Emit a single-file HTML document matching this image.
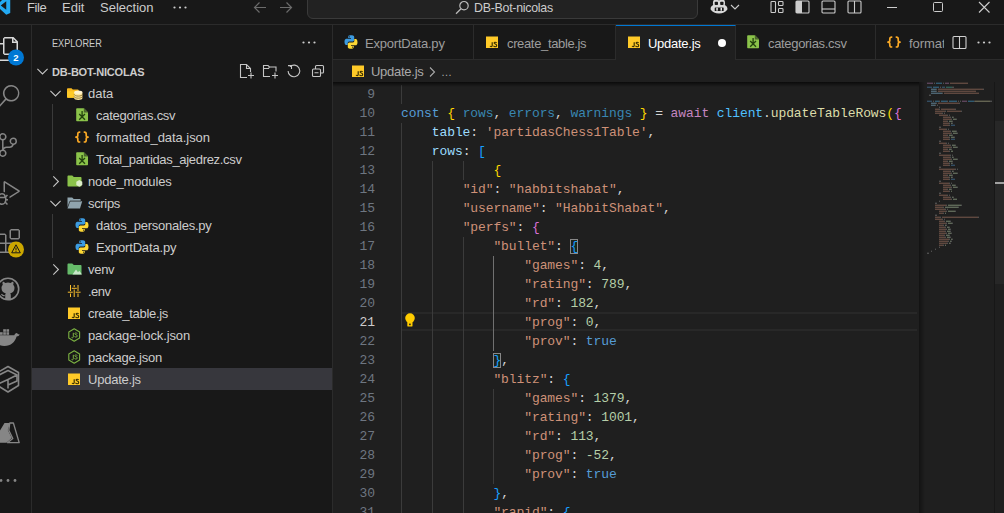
<!DOCTYPE html>
<html>
<head>
<meta charset="utf-8">
<style>
*{box-sizing:border-box;margin:0;padding:0}
html,body{width:1004px;height:513px;overflow:hidden;background:#181818}
body{font-family:"Liberation Sans",sans-serif;color:#cccccc;position:relative;font-size:13px}
.abs{position:absolute}
#title{left:0;top:0;width:1004px;height:25px;background:#181818;border-bottom:1px solid #2b2b2b}
#act{left:0;top:25px;width:32px;height:488px;background:#181818;border-right:1px solid #2b2b2b}
#side{left:32px;top:25px;width:301px;height:488px;background:#181818;border-right:1px solid #2b2b2b}
#tabs{left:333px;top:25px;width:671px;height:35px;background:#181818;border-bottom:1px solid #2b2b2b}
#crumb{left:333px;top:60px;width:671px;height:22px;background:#1f1f1f}
#editor{left:333px;top:82px;width:671px;height:431px;background:#1f1f1f;overflow:hidden}
.menu{top:0;height:16px;line-height:16px;font-size:13px;color:#cccccc}
.row{left:0;width:300px;height:22px;line-height:22px;font-size:13px;color:#cccccc;white-space:nowrap}
.row span.t{position:absolute;top:0}
.tab{top:0;height:35px;border-right:1px solid #2b2b2b;font-size:13px;line-height:35px;color:#9d9d9d;white-space:nowrap;overflow:hidden}
.code{font-family:"Liberation Mono",monospace;font-size:13px;letter-spacing:-0.1px;white-space:pre;line-height:19px;height:19px;left:68px;color:#d4d4d4}
.ln{font-family:"Liberation Mono",monospace;font-size:13px;letter-spacing:-0.1px;line-height:19px;height:19px;left:0;width:42px;text-align:right;color:#6e7681}
.k{color:#569cd6}.v{color:#9cdcfe}.c{color:#4fc1ff}.u{color:#3987b2}.s{color:#ce9178}.n{color:#b5cea8}.f{color:#dcdcaa}.a{color:#c586c0}
.b1{color:#ffd700}.b2{color:#da70d6}.b3{color:#179fff}
.g{width:1px;background:#404040}
.bm{outline:1px solid #888888;outline-offset:-1px;background:#0064001a}
.tab span{height:35px;line-height:35px}
</style>
</head>
<body>
<div id="title" class="abs">
<svg class="abs" style="left:-8.500px;top:-4px" width="19" height="19" viewBox="0 0 100 100"><path d="M96 11 L75 1 L30 42 L10 27 L3 31 L22 50 L3 69 L10 73 L30 58 L75 99 L96 89 Z M75 28 L46 50 L75 72 Z" fill="#23a9f2" fill-rule="evenodd"/></svg>
<div class="abs menu" style="left:27px;letter-spacing:-0.400px">File</div>
<div class="abs menu" style="left:62px">Edit</div>
<div class="abs menu" style="left:100px">Selection</div>
<svg class="abs" style="left:172px;top:5px" width="16" height="5" viewBox="0 0 16 5"><circle cx="2.5" cy="2.5" r="1.1" fill="#ccc"/><circle cx="8" cy="2.5" r="1.1" fill="#ccc"/><circle cx="13.5" cy="2.5" r="1.1" fill="#ccc"/></svg>
<svg class="abs" style="left:253px;top:1px" width="14" height="13" viewBox="0 0 14 13"><path d="M13 6.5H1.5M6.5 1.5l-5 5 5 5" fill="none" stroke="#6b6b6b" stroke-width="1.2"/></svg>
<svg class="abs" style="left:279px;top:1px" width="14" height="13" viewBox="0 0 14 13"><path d="M1 6.5h11.5M7.5 1.5l5 5-5 5" fill="none" stroke="#6b6b6b" stroke-width="1.2"/></svg>
<div class="abs" style="left:307px;top:-6px;width:391px;height:25px;border:1px solid #3a3a3a;border-radius:6px;background:#222222"></div>
<svg class="abs" style="left:455px;top:0px" width="15" height="15" viewBox="0 0 15 15"><circle cx="9" cy="5.7" r="4.2" fill="none" stroke="#bbb" stroke-width="1.2"/><path d="M6 8.8L1 13.8" stroke="#bbb" stroke-width="1.3" fill="none"/></svg>
<div class="abs" style="left:474px;top:0;height:16px;line-height:16px;font-size:12.4px;letter-spacing:-0.270px;color:#cccccc">DB-Bot-nicolas</div>
<svg class="abs" style="left:710px;top:-1px" width="18" height="15" viewBox="0 0 18 15"><path d="M3.200 6C2.400 3 3.400 0 6 0c1.800 0 2.700.800 3 2 .300-1.200 1.200-2 3-2 2.600 0 3.600 3 2.800 6 1.600.800 2.600 2 2.600 3.500v1c-1.800 2.600-4.800 3.900-8.400 3.900S2.400 13.100.600 10.500v-1C.600 8 1.600 6.800 3.200 6z" fill="#d8d8d8"/><rect x="4.700" y="2.800" width="3.300" height="3.200" rx=".8" fill="#181818"/><rect x="10.200" y="2.800" width="3.300" height="3.200" rx=".8" fill="#181818"/><rect x="4.700" y="8.400" width="9" height="3.600" rx=".6" fill="#181818"/><rect x="6.300" y="8.700" width="1.500" height="3" fill="#e8e8e8"/><rect x="10.500" y="8.700" width="1.500" height="3" fill="#e8e8e8"/></svg>
<svg class="abs" style="left:730px;top:4px" width="10" height="7" viewBox="0 0 10 7"><path d="M1 1l4 4 4-4" fill="none" stroke="#ccc" stroke-width="1.100"/></svg>
<svg class="abs" style="left:770px;top:0px" width="15" height="14" viewBox="0 0 15 14"><rect x="1" y="1.500" width="4.500" height="11" rx=".8" fill="none" stroke="#ccc" stroke-width="1.100"/><rect x="8.500" y="1.500" width="4.500" height="4" rx=".8" fill="none" stroke="#ccc" stroke-width="1.100"/><rect x="8.500" y="8.500" width="4.500" height="4" rx=".8" fill="none" stroke="#ccc" stroke-width="1.100"/></svg>
<svg class="abs" style="left:795px;top:0px" width="15" height="14" viewBox="0 0 15 14"><rect x="1" y="1" width="13" height="12" rx="1" fill="none" stroke="#ccc" stroke-width="1.100"/><rect x="1" y="1" width="6" height="12" fill="#ccc"/></svg>
<svg class="abs" style="left:821px;top:0px" width="15" height="14" viewBox="0 0 15 14"><rect x="1" y="1" width="13" height="12" rx="1" fill="none" stroke="#ccc" stroke-width="1.100"/><path d="M1 9h13" stroke="#ccc" stroke-width="1.100"/></svg>
<svg class="abs" style="left:847px;top:0px" width="15" height="14" viewBox="0 0 15 14"><rect x="1" y="1" width="13" height="12" rx="1" fill="none" stroke="#ccc" stroke-width="1.100"/><path d="M7.500 1v12" stroke="#ccc" stroke-width="1.100"/></svg>
<div class="abs" style="left:887px;top:7px;width:10px;height:1px;background:#ccc"></div>
<div class="abs" style="left:933px;top:2px;width:10px;height:10px;border:1px solid #ccc;border-radius:1.500px"></div>
<svg class="abs" style="left:978px;top:1px" width="13" height="13" viewBox="0 0 13 13"><path d="M1 1l10.500 10.500M11.500 1L1 11.500" stroke="#ccc" stroke-width="1.100" fill="none"/></svg>
</div>
<div id="act" class="abs">
<svg class="abs" style="left:0;top:0" width="31" height="488" viewBox="0 25 31 488">
<g transform="translate(-4,37)" fill="#d7d7d7"><path d="M17.5 0h-9L7 1.5V6H2.5L1 7.5v15.07L2.5 24h12.07L16 22.57V18h4.7l1.3-1.43V4.5L17.5 0zm0 2.12l2.38 2.38H17.5V2.12zm-3 20.38h-12v-15H7v9.07L8.5 18h6v4.5zm6-6h-12v-15H16V6h4.5v10.5z"/></g>
<circle cx="16" cy="57.500" r="8" fill="#0078d4"/>
<text x="16" y="61" font-family="Liberation Sans" font-size="9.500" font-weight="bold" fill="#fff" text-anchor="middle">2</text>
<g transform="translate(-4,85)" fill="#868686"><path d="M15.250 0a8.250 8.250 0 0 0-6.180 13.720L1 22.880l1.120 1.120 8.050-9.120A8.251 8.251 0 1 0 15.250.01V0zm0 15a6.750 6.750 0 1 1 0-13.500 6.750 6.750 0 0 1 0 13.500z"/></g>
<g transform="translate(-4,133)" fill="#868686"><path d="M21.007 8.222A3.738 3.738 0 0 0 15.045 5.200a3.737 3.737 0 0 0 1.156 6.583 2.988 2.988 0 0 1-2.668 1.670h-2.990a4.456 4.456 0 0 0-2.989 1.165V7.400a3.737 3.737 0 1 0-1.494 0v9.117a3.776 3.776 0 1 0 1.816.099 2.990 2.990 0 0 1 2.668-1.667h2.990a4.484 4.484 0 0 0 4.223-3.039 3.736 3.736 0 0 0 3.250-3.687zM4.565 3.738a2.242 2.242 0 1 1 4.484 0 2.242 2.242 0 0 1-4.484 0zm4.484 16.441a2.242 2.242 0 1 1-4.484 0 2.242 2.242 0 0 1 4.484 0zm8.221-9.715a2.242 2.242 0 1 1 0-4.485 2.242 2.242 0 0 1 0 4.485z"/></g>
<g transform="translate(-4,181)" fill="#868686"><path d="M10.940 13.500l-1.320 1.320a3.730 3.730 0 0 0-7.240 0L1.060 13.500 0 14.560l1.720 1.720-.220.220V18H0v1.500h1.500v.080c.077.489.214.966.410 1.420L0 22.940 1.060 24l1.650-1.650A4.308 4.308 0 0 0 6 24a4.310 4.310 0 0 0 3.290-1.650L10.940 24 12 22.940 10.090 21c.198-.464.336-.951.410-1.450v-.100H12V18h-1.500v-1.500l-.220-.220L12 14.560l-1.060-1.060zM6 13.500a2.250 2.250 0 0 1 2.250 2.250h-4.500A2.250 2.250 0 0 1 6 13.500zm3 6a3.330 3.330 0 0 1-3 3 3.330 3.330 0 0 1-3-3v-2.250h6v2.250zm14.760-9.900v1.260L13.500 17.370V15.600l8.500-5.370L9 2v9.460a5.070 5.070 0 0 0-1.500-.720V.630L8.640 0l15.120 9.600z"/></g>
<g transform="translate(-4,229)" fill="#868686"><path d="M13.500 1.500L15 0h7.500L24 1.500V9l-1.500 1.500H15L13.500 9V1.500zm1.500 0V9h7.500V1.500H15zM0 15V6l1.500-1.500H9L10.500 6v7.500H18l1.500 1.500v7.500L18 24H1.500L0 22.500V15zm9-1.500V6H1.500v7.500H9zM9 15H1.500v7.500H9V15zm1.500 7.500H18V15h-7.500v7.500z"/></g>
<circle cx="16" cy="249.500" r="8" fill="#cca700"/>
<path d="M16 244.800l4.300 8h-8.600z" fill="none" stroke="#181818" stroke-width="1"/><path d="M16 247.600v2.800M16 251.200v.9" stroke="#181818" stroke-width="1"/>
<circle cx="8" cy="289" r="10.700" fill="none" stroke="#868686" stroke-width="1.600"/>
<path d="M8 282.500c-1 0-1.900.200-2.700.500-.9-.900-2.100-1.300-2.600-1.200-.400 1-.300 2 .100 2.900-.800.900-1.300 2-1.300 3.300 0 3.300 2 4.800 4.300 5.300-.400.400-.600 1-.600 1.700v4.200h5.600v-4.200c0-.700-.200-1.300-.600-1.700 2.300-.500 4.300-2 4.300-5.300 0-1.300-.500-2.400-1.300-3.300.400-.900.500-1.900.100-2.900-.500-.100-1.700.300-2.600 1.200-.800-.300-1.700-.500-2.700-.500z" fill="#868686"/>
<path d="M4.700 295.500c-1.500.500-2.500-.300-3.200-1.500" fill="none" stroke="#868686" stroke-width="1.300"/>
<g fill="#868686"><path d="M-8 335.300h22.300c.300-1.500 1.400-2.500 2.800-2.400.300.900 1.200 1.500 2.500 1.300-.400 1.500-1.500 2.200-3 2.300-1.600 5.500-5.600 9.500-12.200 9.500-6.800 0-10.400-4.200-12.400-10.700z"/><rect x="-3.200" y="332.200" width="2.700" height="2.600"/><rect x="0" y="332.200" width="2.700" height="2.600"/><rect x="3.200" y="332.200" width="2.700" height="2.600"/><rect x="6.400" y="332.200" width="2.700" height="2.600"/><rect x="3.200" y="329.200" width="2.700" height="2.600"/><rect x="6.400" y="329.200" width="2.700" height="2.600"/></g>
<g fill="none" stroke="#868686" stroke-width="1.600" stroke-linejoin="round"><path d="M8 366.500l10.500 6v13l-10.500 6.500-10.500-6.500v-13z"/><path d="M-1 375l9-4.500 9 4.500-9 4.500v9M8 379.500l-9 4M17 375v6l-9 4"/></g>
<path d="M4.500 423h5.500l-2.200 7 4 8-5.300 4.700h-14z" fill="#868686"/><path d="M9.800 423h3.600l5.800 19.700h-11.700l5.300-4.200-4-8.300z" fill="#181818" stroke="#868686" stroke-width="1.300" stroke-linejoin="round"/>
<circle cx="1" cy="480.500" r="1.400" fill="#868686"/><circle cx="8" cy="480.500" r="1.400" fill="#868686"/><circle cx="15" cy="480.500" r="1.400" fill="#868686"/>
</svg>
</div>
<div id="side" class="abs">
<div class="abs" style="left:20px;top:10px;height:16px;line-height:16px;font-size:11px;color:#cccccc;transform:scaleX(0.831);transform-origin:0 0">EXPLORER</div>
<svg class="abs" style="left:269px;top:15px" width="16" height="5" viewBox="0 0 16 5"><circle cx="2.500" cy="2.500" r="1.100" fill="#ccc"/><circle cx="8" cy="2.500" r="1.100" fill="#ccc"/><circle cx="13.500" cy="2.500" r="1.100" fill="#ccc"/></svg>
<div class="abs row" style="top:35px;">
<svg class="abs" style="left:5px;top:6px" width="11" height="11" viewBox="0 0 11 11"><path d="M.400 2.800l5.100 5.100 5.100-5.100" fill="none" stroke="#c5c5c5" stroke-width="1.100"/></svg>
<span class="t fit" style="left:20px;top:0.500px;font-size:11px;font-weight:bold;letter-spacing:-0.218px;">DB-BOT-NICOLAS</span>
</div>
<div class="abs row" style="top:57px;">
<svg class="abs" style="left:18px;top:6px" width="11" height="11" viewBox="0 0 11 11"><path d="M.400 2.800l5.100 5.100 5.100-5.100" fill="none" stroke="#c5c5c5" stroke-width="1.100"/></svg>
<svg class="abs" style="left:33px;top:3px" width="18" height="16" viewBox="0 0 18 16"><path d="M2.900 3.200h3.600l1.300 1.300h5c.500 0 .900.400.900.900v6.400c0 .500-.400.900-.900.900H2.900c-.500 0-.900-.400-.900-.900V4.100c0-.500.400-.900.900-.900z" fill="#f9b91f"/><path d="M2 6.300h11.700v5.500c0 .500-.400.900-.900.900H2.900c-.500 0-.900-.400-.900-.900z" fill="#ffca28"/><path d="M9.200 7.300v6c0 .900 1.800 1.700 4.100 1.700s4.100-.800 4.100-1.700v-6z" fill="#ffe7a0"/><ellipse cx="13.300" cy="7.300" rx="4.100" ry="1.700" fill="#fff3cf"/><path d="M9.200 9.400c0 .900 1.800 1.700 4.100 1.700s4.100-.800 4.100-1.700M9.200 11.500c0 .900 1.800 1.700 4.100 1.700s4.100-.800 4.100-1.700" fill="none" stroke="#6b5510" stroke-width=".7"/></svg>
<span class="t fit" style="left:56px;top:1px;letter-spacing:-0.037px;">data</span>
</div>
<div class="abs row" style="top:79px;">
<svg class="abs" style="left:42px;top:3px" width="16" height="16" viewBox="0 0 16 16"><path d="M3.200 1.300h6.800l4 4v8c0 .600-.400 1-1 1H3.200c-.600 0-1-.400-1-1V2.300c0-.600.400-1 1-1z" fill="#8bc34a"/><path d="M9.800 1.300v4.200h4.200z" fill="#181818" opacity=".55"/><path d="M5.200 7l5.800 5.800M11 7l-5.800 5.800M8.100 4v5" stroke="#23420e" stroke-width="1.300" fill="none"/></svg>
<span class="t fit" style="left:64px;top:1px;letter-spacing:-0.269px;">categorias.csv</span>
</div>
<div class="abs row" style="top:101px;">
<svg class="abs" style="left:42px;top:3px" width="16" height="16" viewBox="0 0 16 16"><path d="M6.300 3.200H5.600c-1.100 0-1.800.600-1.800 1.700v1.600c0 .900-.700 1.600-1.900 1.600 1.200 0 1.900.700 1.900 1.600v1.600c0 1.100.700 1.700 1.800 1.700h.700M9.700 3.200h.700c1.100 0 1.800.600 1.800 1.700v1.600c0 .900.700 1.600 1.900 1.600-1.200 0-1.900.700-1.900 1.600v1.600c0 1.100-.700 1.700-1.800 1.700h-.700" fill="none" stroke="#f9a825" stroke-width="1.700" stroke-linejoin="round"/></svg>
<span class="t fit" style="left:64px;top:1px;letter-spacing:-0.051px;">formatted_data.json</span>
</div>
<div class="abs row" style="top:123px;">
<svg class="abs" style="left:42px;top:3px" width="16" height="16" viewBox="0 0 16 16"><path d="M3.200 1.300h6.800l4 4v8c0 .600-.400 1-1 1H3.200c-.600 0-1-.400-1-1V2.300c0-.600.400-1 1-1z" fill="#8bc34a"/><path d="M9.800 1.300v4.200h4.200z" fill="#181818" opacity=".55"/><path d="M5.200 7l5.800 5.800M11 7l-5.800 5.800M8.100 4v5" stroke="#23420e" stroke-width="1.300" fill="none"/></svg>
<span class="t fit" style="left:64px;top:1px;letter-spacing:-0.321px;">Total_partidas_ajedrez.csv</span>
</div>
<div class="abs row" style="top:145px;">
<svg class="abs" style="left:18px;top:6px" width="11" height="11" viewBox="0 0 11 11"><path d="M3.300.400l5.100 5.100-5.100 5.100" fill="none" stroke="#c5c5c5" stroke-width="1.100"/></svg>
<svg class="abs" style="left:34px;top:3px" width="18" height="16" viewBox="0 0 18 16"><path d="M1.500 2.500h4.800l1.500 1.500h6.700c.600 0 1 .400 1 1v7.500c0 .600-.400 1-1 1h-12c-.600 0-1-.400-1-1v-9c0-.600.400-1 1-1z" fill="#8bc34a"/><path d="M13.300 7l3 1.700v3.400l-3 1.700-3-1.700V8.700z" fill="#dcedc8"/></svg>
<span class="t fit" style="left:56px;top:1px;letter-spacing:-0.135px;">node_modules</span>
</div>
<div class="abs row" style="top:167px;">
<svg class="abs" style="left:18px;top:6px" width="11" height="11" viewBox="0 0 11 11"><path d="M.400 2.800l5.100 5.100 5.100-5.100" fill="none" stroke="#c5c5c5" stroke-width="1.100"/></svg>
<svg class="abs" style="left:34px;top:3px" width="18" height="16" viewBox="0 0 18 16"><path d="M1.500 2.500h4.700l1.500 1.500h6c.600 0 1 .400 1 1v1.200H4.200L1.500 12.500z" fill="#90a4ae"/><path d="M3.600 6.200h12.600l-2.200 7.300H1.500z" fill="#90a4ae"/><path d="M1.500 12.500L4 6h11" stroke="#181818" stroke-width=".6" fill="none"/></svg>
<span class="t fit" style="left:56px;top:1px;letter-spacing:-0.331px;">scrips</span>
</div>
<div class="abs row" style="top:189px;">
<svg class="abs" style="left:42px;top:3px" width="16" height="16" viewBox="0 0 16 16"><path d="M7.900 1.200c-2.800 0-2.700 1.200-2.700 1.200v1.700h2.800v.600H3.600S1.500 4.500 1.500 7.800s1.800 3.200 1.800 3.200h1.400V9.300s-.100-1.800 1.800-1.800h3s1.700 0 1.700-1.700V2.900s.300-1.700-3.300-1.700zM6.300 2.200a.600.600 0 1 1 0 1.200.600.600 0 0 1 0-1.200z" fill="#3c9be0"/><path d="M8.100 14.800c2.800 0 2.700-1.200 2.700-1.200v-1.700H8v-.600h4.400s2.100.200 2.100-3.100-1.800-3.200-1.800-3.200h-1.400v1.700s.100 1.800-1.800 1.800h-3s-1.700 0-1.700 1.700v2.900s-.300 1.700 3.300 1.700zm1.600-1a.600.600 0 1 1 0-1.200.600.600 0 0 1 0 1.200z" fill="#fdd835"/></svg>
<span class="t fit" style="left:64px;top:1px;letter-spacing:-0.233px;">datos_personales.py</span>
</div>
<div class="abs row" style="top:211px;">
<svg class="abs" style="left:42px;top:3px" width="16" height="16" viewBox="0 0 16 16"><path d="M7.900 1.200c-2.800 0-2.700 1.200-2.700 1.200v1.700h2.800v.600H3.600S1.500 4.500 1.500 7.800s1.800 3.200 1.800 3.200h1.400V9.300s-.100-1.800 1.800-1.800h3s1.700 0 1.700-1.700V2.900s.300-1.700-3.300-1.700zM6.300 2.200a.600.600 0 1 1 0 1.200.600.600 0 0 1 0-1.200z" fill="#3c9be0"/><path d="M8.100 14.800c2.800 0 2.700-1.200 2.700-1.200v-1.700H8v-.600h4.400s2.100.200 2.100-3.100-1.800-3.200-1.800-3.200h-1.400v1.700s.100 1.800-1.800 1.800h-3s-1.700 0-1.700 1.700v2.900s-.300 1.700 3.300 1.700zm1.600-1a.600.600 0 1 1 0-1.200.600.600 0 0 1 0 1.200z" fill="#fdd835"/></svg>
<span class="t fit" style="left:64px;top:1px;letter-spacing:-0.157px;">ExportData.py</span>
</div>
<div class="abs row" style="top:233px;">
<svg class="abs" style="left:18px;top:6px" width="11" height="11" viewBox="0 0 11 11"><path d="M3.300.400l5.100 5.100-5.100 5.100" fill="none" stroke="#c5c5c5" stroke-width="1.100"/></svg>
<svg class="abs" style="left:34px;top:3px" width="18" height="16" viewBox="0 0 18 16"><path d="M1.500 2.500h4.800l1.500 1.500h6.700c.600 0 1 .400 1 1v7.500c0 .600-.400 1-1 1h-12c-.600 0-1-.400-1-1v-9c0-.600.400-1 1-1z" fill="#66bb6a"/><path d="M6.500 13.500l3.500-5 2 2.800 1.300-1.600 2.700 3.800z" fill="#c8e6c9"/></svg>
<span class="t fit" style="left:56px;top:1px;letter-spacing:-0.287px;">venv</span>
</div>
<div class="abs row" style="top:255px;">
<svg class="abs" style="left:33px;top:3px" width="16" height="16" viewBox="0 0 16 16"><path d="M5.500 2v6M5.500 10.500v3.500M2.800 9.200h5M9.200 2v2M9.200 6.500v7.500M6.800 5.300h5M13 2v6M13 10.500v3.500M10.600 9.200h5" stroke="#fbc02d" stroke-width="1" fill="none"/></svg>
<span class="t fit" style="left:56px;top:1px;letter-spacing:-0.491px;">.env</span>
</div>
<div class="abs row" style="top:277px;">
<svg class="abs" style="left:33px;top:3px" width="16" height="16" viewBox="0 0 16 16"><rect x="3" y="2.500" width="12" height="11.500" fill="#ffca28"/><path d="M9.200 8.200v3.300c0 .800-.500 1.100-1 1.100-.500 0-.900-.200-1.100-.700" fill="none" stroke="#3a3000" stroke-width="1.200"/><path d="M13.600 9c-.300-.500-.800-.800-1.400-.800-.700 0-1.100.400-1.100.900 0 1.200 2.600.700 2.600 2.300 0 .800-.700 1.300-1.500 1.300-.800 0-1.300-.300-1.700-1" fill="none" stroke="#3a3000" stroke-width="1.100"/></svg>
<span class="t fit" style="left:56px;top:1px;letter-spacing:-0.304px;">create_table.js</span>
</div>
<div class="abs row" style="top:299px;">
<svg class="abs" style="left:33px;top:3px" width="16" height="16" viewBox="0 0 16 16"><path d="M9.200 1.800l5.400 3.100v6.200l-5.400 3.100-5.400-3.100V4.900z" fill="none" stroke="#7cb342" stroke-width="1.100" stroke-linejoin="round"/><path d="M8.300 5.800v4c0 .700-.400 1-.900 1-.400 0-.700-.100-.900-.400" fill="none" stroke="#7cb342" stroke-width="1"/><path d="M12.200 6.700c-.300-.600-.700-.900-1.300-.900-.600 0-1.100.400-1.100.900 0 1.300 2.500.700 2.500 2.300 0 .700-.600 1.100-1.400 1.100-.700 0-1.200-.300-1.500-.900" fill="none" stroke="#7cb342" stroke-width=".9"/></svg>
<span class="t fit" style="left:56px;top:1px;letter-spacing:-0.117px;">package-lock.json</span>
</div>
<div class="abs row" style="top:321px;">
<svg class="abs" style="left:33px;top:3px" width="16" height="16" viewBox="0 0 16 16"><path d="M9.200 1.800l5.400 3.100v6.200l-5.400 3.100-5.400-3.100V4.900z" fill="none" stroke="#7cb342" stroke-width="1.100" stroke-linejoin="round"/><path d="M8.300 5.800v4c0 .700-.400 1-.900 1-.400 0-.700-.100-.900-.400" fill="none" stroke="#7cb342" stroke-width="1"/><path d="M12.200 6.700c-.300-.600-.700-.900-1.300-.900-.600 0-1.100.400-1.100.900 0 1.300 2.500.700 2.500 2.300 0 .700-.600 1.100-1.400 1.100-.700 0-1.200-.300-1.500-.900" fill="none" stroke="#7cb342" stroke-width=".9"/></svg>
<span class="t fit" style="left:56px;top:1px;letter-spacing:-0.220px;">package.json</span>
</div>
<div class="abs row" style="top:343px;background:#37373d;">
<svg class="abs" style="left:33px;top:3px" width="16" height="16" viewBox="0 0 16 16"><rect x="3" y="2.500" width="12" height="11.500" fill="#ffca28"/><path d="M9.200 8.200v3.300c0 .800-.500 1.100-1 1.100-.500 0-.900-.200-1.100-.700" fill="none" stroke="#3a3000" stroke-width="1.200"/><path d="M13.600 9c-.300-.500-.800-.800-1.400-.800-.700 0-1.100.400-1.100.900 0 1.200 2.600.700 2.600 2.300 0 .800-.700 1.300-1.500 1.300-.800 0-1.300-.300-1.700-1" fill="none" stroke="#3a3000" stroke-width="1.100"/></svg>
<span class="t fit" style="left:56px;top:1px;letter-spacing:-0.228px;">Update.js</span>
</div>
<div class="abs" style="left:20px;top:79px;width:1px;height:66px;background:#3a3a3a"></div>
<div class="abs" style="left:20px;top:189px;width:1px;height:44px;background:#3a3a3a"></div>
<svg class="abs" style="left:207px;top:37px" width="88" height="18" viewBox="0 0 88 18" fill="none" stroke="#c5c5c5" stroke-width="1.100"><path d="M8 15.500H1.500v-13h6l4 4v3.500M7.500 2.500v4H11.500M9 13.500h6M12 10.500v6"/><path d="M31 14.500H24.500v-11h4.500l1.500 1.500h6.500v4.500M24.500 6.500h5l1-1.500M33 13.500h6M36 10.500v6"/><path d="M50.900 4.700A5.800 5.800 0 1 1 49.100 8.900M49 3.600h3.500v3.500"/><rect x="73.500" y="7" width="8" height="7.500" rx="1"/><path d="M76.500 7v-2.500c0-.500.500-1 1-1h6c.500 0 1 .500 1 1v5.500c0 .500-.500 1-1 1h-2M75.500 10.800h4"/></svg>
</div>
<div id="tabs" class="abs">
<div class="abs tab" style="left:0px;width:141px;">
<svg class="abs" style="left:10px;top:9px" width="16" height="16" viewBox="0 0 16 16"><path d="M7.900 1.200c-2.800 0-2.700 1.200-2.700 1.200v1.700h2.800v.600H3.600S1.500 4.500 1.500 7.800s1.800 3.200 1.800 3.200h1.400V9.300s-.100-1.800 1.800-1.800h3s1.700 0 1.700-1.700V2.900s.300-1.700-3.300-1.700zM6.300 2.200a.600.600 0 1 1 0 1.200.600.600 0 0 1 0-1.200z" fill="#3c9be0"/><path d="M8.100 14.800c2.800 0 2.700-1.200 2.700-1.200v-1.700H8v-.600h4.400s2.100.200 2.100-3.100-1.800-3.200-1.800-3.200h-1.400v1.700s.100 1.800-1.800 1.800h-3s-1.700 0-1.700 1.700v2.900s-.300 1.700 3.300 1.700zm1.600-1a.600.600 0 1 1 0-1.200.600.600 0 0 1 0 1.200z" fill="#fdd835"/></svg>
<span class="abs fit" id="tab:ExportData.py" style="left:32px;top:1px;color:#9d9d9d;letter-spacing:-0.207px;">ExportData.py</span>
</div>
<div class="abs tab" style="left:141px;width:142px;">
<svg class="abs" style="left:9px;top:9px" width="16" height="16" viewBox="0 0 16 16"><rect x="3" y="2.500" width="12" height="11.500" fill="#ffca28"/><path d="M9.200 8.200v3.300c0 .800-.500 1.100-1 1.100-.500 0-.900-.200-1.100-.700" fill="none" stroke="#3a3000" stroke-width="1.200"/><path d="M13.600 9c-.300-.500-.800-.800-1.400-.800-.700 0-1.100.400-1.100.900 0 1.200 2.600.700 2.600 2.300 0 .800-.700 1.300-1.500 1.300-.800 0-1.300-.300-1.700-1" fill="none" stroke="#3a3000" stroke-width="1.100"/></svg>
<span class="abs fit" id="tab:create_table.js" style="left:33px;top:1px;color:#9d9d9d;letter-spacing:-0.354px;">create_table.js</span>
</div>
<div class="abs tab" style="left:283px;width:120px;background:#1f1f1f;height:36px;border-top:1px solid #0078d4;">
<svg class="abs" style="left:9px;top:8px" width="16" height="16" viewBox="0 0 16 16"><rect x="3" y="2.500" width="12" height="11.500" fill="#ffca28"/><path d="M9.200 8.200v3.300c0 .800-.500 1.100-1 1.100-.500 0-.900-.200-1.100-.700" fill="none" stroke="#3a3000" stroke-width="1.200"/><path d="M13.600 9c-.300-.500-.800-.800-1.400-.800-.700 0-1.100.400-1.100.900 0 1.200 2.600.700 2.600 2.300 0 .800-.700 1.300-1.500 1.300-.800 0-1.300-.300-1.700-1" fill="none" stroke="#3a3000" stroke-width="1.100"/></svg>
<span class="abs fit" id="tab:Update.js" style="left:32px;top:0px;color:#ffffff;letter-spacing:-0.266px;">Update.js</span>
<div class="abs" style="left:101.500px;top:13px;width:8px;height:8px;border-radius:4px;background:#ffffff"></div>
</div>
<div class="abs tab" style="left:403px;width:140px;">
<svg class="abs" style="left:9px;top:9px" width="16" height="16" viewBox="0 0 16 16"><path d="M3.200 1.300h6.800l4 4v8c0 .600-.400 1-1 1H3.200c-.600 0-1-.400-1-1V2.300c0-.600.400-1 1-1z" fill="#8bc34a"/><path d="M9.800 1.300v4.200h4.200z" fill="#181818" opacity=".55"/><path d="M5.200 7l5.800 5.800M11 7l-5.800 5.800M8.100 4v5" stroke="#23420e" stroke-width="1.300" fill="none"/></svg>
<span class="abs fit" id="tab:categorias.csv" style="left:32px;top:1px;color:#9d9d9d;letter-spacing:-0.323px;">categorias.csv</span>
</div>
<div class="abs tab" style="left:543px;width:140px;">
<svg class="abs" style="left:10px;top:9px" width="16" height="16" viewBox="0 0 16 16"><path d="M6.300 3.200H5.600c-1.100 0-1.800.600-1.800 1.700v1.600c0 .900-.700 1.600-1.900 1.600 1.200 0 1.900.700 1.900 1.600v1.600c0 1.100.700 1.700 1.800 1.700h.700M9.700 3.200h.700c1.100 0 1.800.600 1.800 1.700v1.600c0 .900.700 1.600 1.900 1.600-1.200 0-1.900.700-1.900 1.600v1.600c0 1.100-.700 1.700-1.800 1.700h-.700" fill="none" stroke="#f9a825" stroke-width="1.700" stroke-linejoin="round"/></svg>
<span class="abs fit" id="tab:formatted_data.json" style="left:33px;top:1px;color:#9d9d9d;letter-spacing:-0.051px;">formatted_data.json</span>
</div>
<div class="abs" style="left:611px;top:0;width:60px;height:34px;background:#181818"></div>
<svg class="abs" style="left:619px;top:10px" width="15" height="15" viewBox="0 0 15 15" fill="none" stroke="#d0d0d0" stroke-width="1.100"><rect x="1" y="1.500" width="13" height="12" rx="1"/><path d="M7.500 1.500v12"/></svg>
<svg class="abs" style="left:643px;top:15px" width="16" height="5" viewBox="0 0 16 5"><circle cx="2.500" cy="2.500" r="1.100" fill="#ccc"/><circle cx="8" cy="2.500" r="1.100" fill="#ccc"/><circle cx="13.500" cy="2.500" r="1.100" fill="#ccc"/></svg>
</div>
<div id="crumb" class="abs">
<svg class="abs" style="left:16px;top:3px" width="16" height="16" viewBox="0 0 16 16"><rect x="3" y="2.500" width="12" height="11.500" fill="#ffca28"/><path d="M9.200 8.200v3.300c0 .800-.500 1.100-1 1.100-.500 0-.900-.200-1.100-.700" fill="none" stroke="#3a3000" stroke-width="1.200"/><path d="M13.600 9c-.300-.500-.800-.800-1.400-.800-.700 0-1.100.400-1.100.900 0 1.200 2.600.700 2.600 2.300 0 .800-.700 1.300-1.500 1.300-.800 0-1.300-.300-1.700-1" fill="none" stroke="#3a3000" stroke-width="1.100"/></svg>
<span class="abs fit" id="crumb:Update.js" style="left:38px;top:1px;height:22px;line-height:22px;font-size:13px;color:#a9a9a9;letter-spacing:-0.266px;">Update.js</span>
<svg class="abs" style="left:95px;top:6px" width="9" height="12" viewBox="0 0 9 12"><path d="M2 1.500l4.500 4.500-4.500 4.500" fill="none" stroke="#a9a9a9" stroke-width="1.100"/></svg>
<span class="abs" style="left:108px;top:1px;height:22px;line-height:22px;font-size:11px;color:#a9a9a9">…</span>
</div>
<div id="editor" class="abs">
<div class="abs" style="left:68px;top:230px;width:516px;height:19px;border-top:2px solid #282828;border-bottom:2px solid #282828"></div>
<div class="abs g" style="left:68.0px;top:2.5px;height:19px;background:#3b3b3b"></div>
<div class="abs ln" style="top:2.5px;">9</div>
<div class="abs code" style="top:2.5px"></div>
<div class="abs ln" style="top:21.5px;">10</div>
<div class="abs code" style="top:21.5px"><span class="k">const</span> <span class="b1">{</span> <span class="u">rows</span>, <span class="u">errors</span>, <span class="u">warnings</span> <span class="b1">}</span> = <span class="a">await</span> <span class="c">client</span>.<span class="f">updateTableRows</span><span class="b1">(</span><span class="b2">{</span></div>
<div class="abs g" style="left:68.0px;top:40.5px;height:19px;background:#3b3b3b"></div>
<div class="abs ln" style="top:40.5px;">11</div>
<div class="abs code" style="top:40.5px">    <span class="v">table</span>: <span class="s">'partidasChess1Table'</span>,</div>
<div class="abs g" style="left:68.0px;top:59.5px;height:19px;background:#3b3b3b"></div>
<div class="abs ln" style="top:59.5px;">12</div>
<div class="abs code" style="top:59.5px">    <span class="v">rows</span>: <span class="b3">[</span></div>
<div class="abs g" style="left:68.0px;top:78.5px;height:19px;background:#3b3b3b"></div>
<div class="abs g" style="left:98.8px;top:78.5px;height:19px;background:#3b3b3b"></div>
<div class="abs g" style="left:129.6px;top:78.5px;height:19px;background:#3b3b3b"></div>
<div class="abs ln" style="top:78.5px;">13</div>
<div class="abs code" style="top:78.5px">            <span class="b1">{</span></div>
<div class="abs g" style="left:68.0px;top:97.5px;height:19px;background:#3b3b3b"></div>
<div class="abs g" style="left:98.8px;top:97.5px;height:19px;background:#3b3b3b"></div>
<div class="abs ln" style="top:97.5px;">14</div>
<div class="abs code" style="top:97.5px">        <span class="s">"id"</span>: <span class="s">"habbitshabat"</span>,</div>
<div class="abs g" style="left:68.0px;top:116.5px;height:19px;background:#3b3b3b"></div>
<div class="abs g" style="left:98.8px;top:116.5px;height:19px;background:#3b3b3b"></div>
<div class="abs ln" style="top:116.5px;">15</div>
<div class="abs code" style="top:116.5px">        <span class="s">"username"</span>: <span class="s">"HabbitShabat"</span>,</div>
<div class="abs g" style="left:68.0px;top:135.5px;height:19px;background:#3b3b3b"></div>
<div class="abs g" style="left:98.8px;top:135.5px;height:19px;background:#3b3b3b"></div>
<div class="abs ln" style="top:135.5px;">16</div>
<div class="abs code" style="top:135.5px">        <span class="s">"perfs"</span>: <span class="b2">{</span></div>
<div class="abs g" style="left:68.0px;top:154.5px;height:19px;background:#3b3b3b"></div>
<div class="abs g" style="left:98.8px;top:154.5px;height:19px;background:#3b3b3b"></div>
<div class="abs g" style="left:129.6px;top:154.5px;height:19px;background:#3b3b3b"></div>
<div class="abs ln" style="top:154.5px;">17</div>
<div class="abs code" style="top:154.5px">            <span class="s">"bullet"</span>: <span class="b3 bm">{</span></div>
<div class="abs g" style="left:68.0px;top:173.5px;height:19px;background:#3b3b3b"></div>
<div class="abs g" style="left:98.8px;top:173.5px;height:19px;background:#3b3b3b"></div>
<div class="abs g" style="left:129.6px;top:173.5px;height:19px;background:#3b3b3b"></div>
<div class="abs g" style="left:160.4px;top:173.5px;height:19px;background:#707070"></div>
<div class="abs ln" style="top:173.5px;">18</div>
<div class="abs code" style="top:173.5px">                <span class="s">"games"</span>: <span class="n">4</span>,</div>
<div class="abs g" style="left:68.0px;top:192.5px;height:19px;background:#3b3b3b"></div>
<div class="abs g" style="left:98.8px;top:192.5px;height:19px;background:#3b3b3b"></div>
<div class="abs g" style="left:129.6px;top:192.5px;height:19px;background:#3b3b3b"></div>
<div class="abs g" style="left:160.4px;top:192.5px;height:19px;background:#707070"></div>
<div class="abs ln" style="top:192.5px;">19</div>
<div class="abs code" style="top:192.5px">                <span class="s">"rating"</span>: <span class="n">789</span>,</div>
<div class="abs g" style="left:68.0px;top:211.5px;height:19px;background:#3b3b3b"></div>
<div class="abs g" style="left:98.8px;top:211.5px;height:19px;background:#3b3b3b"></div>
<div class="abs g" style="left:129.6px;top:211.5px;height:19px;background:#3b3b3b"></div>
<div class="abs g" style="left:160.4px;top:211.5px;height:19px;background:#707070"></div>
<div class="abs ln" style="top:211.5px;">20</div>
<div class="abs code" style="top:211.5px">                <span class="s">"rd"</span>: <span class="n">182</span>,</div>
<div class="abs g" style="left:68.0px;top:230.5px;height:19px;background:#3b3b3b"></div>
<div class="abs g" style="left:98.8px;top:230.5px;height:19px;background:#3b3b3b"></div>
<div class="abs g" style="left:129.6px;top:230.5px;height:19px;background:#3b3b3b"></div>
<div class="abs g" style="left:160.4px;top:230.5px;height:19px;background:#707070"></div>
<div class="abs ln" style="top:230.5px;color:#cccccc;">21</div>
<div class="abs code" style="top:230.5px">                <span class="s">"prog"</span>: <span class="n">0</span>,</div>
<div class="abs g" style="left:68.0px;top:249.5px;height:19px;background:#3b3b3b"></div>
<div class="abs g" style="left:98.8px;top:249.5px;height:19px;background:#3b3b3b"></div>
<div class="abs g" style="left:129.6px;top:249.5px;height:19px;background:#3b3b3b"></div>
<div class="abs g" style="left:160.4px;top:249.5px;height:19px;background:#707070"></div>
<div class="abs ln" style="top:249.5px;">22</div>
<div class="abs code" style="top:249.5px">                <span class="s">"prov"</span>: <span class="k">true</span></div>
<div class="abs g" style="left:68.0px;top:268.5px;height:19px;background:#3b3b3b"></div>
<div class="abs g" style="left:98.8px;top:268.5px;height:19px;background:#3b3b3b"></div>
<div class="abs g" style="left:129.6px;top:268.5px;height:19px;background:#3b3b3b"></div>
<div class="abs ln" style="top:268.5px;">23</div>
<div class="abs code" style="top:268.5px">            <span class="b3 bm">}</span>,</div>
<div class="abs g" style="left:68.0px;top:287.5px;height:19px;background:#3b3b3b"></div>
<div class="abs g" style="left:98.8px;top:287.5px;height:19px;background:#3b3b3b"></div>
<div class="abs g" style="left:129.6px;top:287.5px;height:19px;background:#3b3b3b"></div>
<div class="abs ln" style="top:287.5px;">24</div>
<div class="abs code" style="top:287.5px">            <span class="s">"blitz"</span>: <span class="b3">{</span></div>
<div class="abs g" style="left:68.0px;top:306.5px;height:19px;background:#3b3b3b"></div>
<div class="abs g" style="left:98.8px;top:306.5px;height:19px;background:#3b3b3b"></div>
<div class="abs g" style="left:129.6px;top:306.5px;height:19px;background:#3b3b3b"></div>
<div class="abs g" style="left:160.4px;top:306.5px;height:19px;background:#3b3b3b"></div>
<div class="abs ln" style="top:306.5px;">25</div>
<div class="abs code" style="top:306.5px">                <span class="s">"games"</span>: <span class="n">1379</span>,</div>
<div class="abs g" style="left:68.0px;top:325.5px;height:19px;background:#3b3b3b"></div>
<div class="abs g" style="left:98.8px;top:325.5px;height:19px;background:#3b3b3b"></div>
<div class="abs g" style="left:129.6px;top:325.5px;height:19px;background:#3b3b3b"></div>
<div class="abs g" style="left:160.4px;top:325.5px;height:19px;background:#3b3b3b"></div>
<div class="abs ln" style="top:325.5px;">26</div>
<div class="abs code" style="top:325.5px">                <span class="s">"rating"</span>: <span class="n">1001</span>,</div>
<div class="abs g" style="left:68.0px;top:344.5px;height:19px;background:#3b3b3b"></div>
<div class="abs g" style="left:98.8px;top:344.5px;height:19px;background:#3b3b3b"></div>
<div class="abs g" style="left:129.6px;top:344.5px;height:19px;background:#3b3b3b"></div>
<div class="abs g" style="left:160.4px;top:344.5px;height:19px;background:#3b3b3b"></div>
<div class="abs ln" style="top:344.5px;">27</div>
<div class="abs code" style="top:344.5px">                <span class="s">"rd"</span>: <span class="n">113</span>,</div>
<div class="abs g" style="left:68.0px;top:363.5px;height:19px;background:#3b3b3b"></div>
<div class="abs g" style="left:98.8px;top:363.5px;height:19px;background:#3b3b3b"></div>
<div class="abs g" style="left:129.6px;top:363.5px;height:19px;background:#3b3b3b"></div>
<div class="abs g" style="left:160.4px;top:363.5px;height:19px;background:#3b3b3b"></div>
<div class="abs ln" style="top:363.5px;">28</div>
<div class="abs code" style="top:363.5px">                <span class="s">"prog"</span>: <span class="n">-52</span>,</div>
<div class="abs g" style="left:68.0px;top:382.5px;height:19px;background:#3b3b3b"></div>
<div class="abs g" style="left:98.8px;top:382.5px;height:19px;background:#3b3b3b"></div>
<div class="abs g" style="left:129.6px;top:382.5px;height:19px;background:#3b3b3b"></div>
<div class="abs g" style="left:160.4px;top:382.5px;height:19px;background:#3b3b3b"></div>
<div class="abs ln" style="top:382.5px;">29</div>
<div class="abs code" style="top:382.5px">                <span class="s">"prov"</span>: <span class="k">true</span></div>
<div class="abs g" style="left:68.0px;top:401.5px;height:19px;background:#3b3b3b"></div>
<div class="abs g" style="left:98.8px;top:401.5px;height:19px;background:#3b3b3b"></div>
<div class="abs g" style="left:129.6px;top:401.5px;height:19px;background:#3b3b3b"></div>
<div class="abs ln" style="top:401.5px;">30</div>
<div class="abs code" style="top:401.5px">            <span class="b3">}</span>,</div>
<div class="abs g" style="left:68.0px;top:420.5px;height:19px;background:#3b3b3b"></div>
<div class="abs g" style="left:98.8px;top:420.5px;height:19px;background:#3b3b3b"></div>
<div class="abs g" style="left:129.6px;top:420.5px;height:19px;background:#3b3b3b"></div>
<div class="abs ln" style="top:420.5px;">31</div>
<div class="abs code" style="top:420.5px">            <span class="s">"rapid"</span>: <span class="b3">{</span></div>
<svg class="abs" style="left:72px;top:230.500px" width="11" height="15" viewBox="0 0 11 15"><circle cx="5" cy="5.100" r="4.800" fill="#ffcc00"/><path d="M2.300 8h5.200v4.700c0 .500-.400.900-.900.900H3.200c-.500 0-.900-.400-.900-.900z" fill="#ffcc00"/><rect x="4.100" y="10.600" width="1.600" height="1.600" fill="#1f1f1f"/></svg>
<div class="abs" style="left:0;top:0;width:586px;height:5px;background:linear-gradient(#000000aa,#00000000)"></div>
<div class="abs" style="left:586px;top:0;width:6px;height:431px;background:linear-gradient(90deg,#00000066,#00000000)"></div>
<svg class="abs" style="left:0;top:0" width="671" height="431" viewBox="0 0 671 431" shape-rendering="crispEdges"><rect x="594" y="1.00" width="6" height="1" fill="#c586c0" opacity="0.37"/><rect x="594" y="0.00" width="6" height="1" fill="#c586c0" opacity="0.15"/><rect x="601" y="1.00" width="1" height="1" fill="#d4d4d4" opacity="0.27"/><rect x="601" y="0.00" width="1" height="1" fill="#d4d4d4" opacity="0.11"/><rect x="603" y="1.00" width="6" height="1" fill="#4fc1ff" opacity="0.37"/><rect x="603" y="0.00" width="6" height="1" fill="#4fc1ff" opacity="0.15"/><rect x="610" y="1.00" width="1" height="1" fill="#d4d4d4" opacity="0.27"/><rect x="610" y="0.00" width="1" height="1" fill="#d4d4d4" opacity="0.11"/><rect x="612" y="1.00" width="4" height="1" fill="#c586c0" opacity="0.37"/><rect x="612" y="0.00" width="4" height="1" fill="#c586c0" opacity="0.15"/><rect x="617" y="1.00" width="18" height="1" fill="#ce9178" opacity="0.37"/><rect x="617" y="0.00" width="18" height="1" fill="#ce9178" opacity="0.15"/><rect x="594" y="5.00" width="5" height="1" fill="#569cd6" opacity="0.37"/><rect x="594" y="4.00" width="5" height="1" fill="#569cd6" opacity="0.15"/><rect x="600" y="5.00" width="6" height="1" fill="#4fc1ff" opacity="0.37"/><rect x="600" y="4.00" width="6" height="1" fill="#4fc1ff" opacity="0.15"/><rect x="607" y="5.00" width="1" height="1" fill="#d4d4d4" opacity="0.27"/><rect x="607" y="4.00" width="1" height="1" fill="#d4d4d4" opacity="0.11"/><rect x="609" y="5.00" width="3" height="1" fill="#569cd6" opacity="0.37"/><rect x="609" y="4.00" width="3" height="1" fill="#569cd6" opacity="0.15"/><rect x="613" y="5.00" width="6" height="1" fill="#4ec9b0" opacity="0.37"/><rect x="613" y="4.00" width="6" height="1" fill="#4ec9b0" opacity="0.15"/><rect x="619" y="5.00" width="1" height="1" fill="#d4d4d4" opacity="0.27"/><rect x="619" y="4.00" width="1" height="1" fill="#d4d4d4" opacity="0.11"/><rect x="620" y="5.00" width="1" height="1" fill="#d4d4d4" opacity="0.27"/><rect x="620" y="4.00" width="1" height="1" fill="#d4d4d4" opacity="0.11"/><rect x="598" y="7.00" width="5" height="1" fill="#9cdcfe" opacity="0.37"/><rect x="598" y="6.00" width="5" height="1" fill="#9cdcfe" opacity="0.15"/><rect x="603" y="7.00" width="1" height="1" fill="#d4d4d4" opacity="0.27"/><rect x="603" y="6.00" width="1" height="1" fill="#d4d4d4" opacity="0.11"/><rect x="605" y="7.00" width="45" height="1" fill="#ce9178" opacity="0.37"/><rect x="605" y="6.00" width="45" height="1" fill="#ce9178" opacity="0.15"/><rect x="650" y="7.00" width="1" height="1" fill="#d4d4d4" opacity="0.27"/><rect x="650" y="6.00" width="1" height="1" fill="#d4d4d4" opacity="0.11"/><rect x="598" y="9.00" width="5" height="1" fill="#9cdcfe" opacity="0.37"/><rect x="598" y="8.00" width="5" height="1" fill="#9cdcfe" opacity="0.15"/><rect x="603" y="9.00" width="1" height="1" fill="#d4d4d4" opacity="0.27"/><rect x="603" y="8.00" width="1" height="1" fill="#d4d4d4" opacity="0.11"/><rect x="605" y="9.00" width="38" height="1" fill="#ce9178" opacity="0.37"/><rect x="605" y="8.00" width="38" height="1" fill="#ce9178" opacity="0.15"/><rect x="598" y="11.00" width="11" height="1" fill="#9cdcfe" opacity="0.37"/><rect x="598" y="10.00" width="11" height="1" fill="#9cdcfe" opacity="0.15"/><rect x="609" y="11.00" width="1" height="1" fill="#d4d4d4" opacity="0.27"/><rect x="609" y="10.00" width="1" height="1" fill="#d4d4d4" opacity="0.11"/><rect x="611" y="11.00" width="35" height="1" fill="#ce9178" opacity="0.37"/><rect x="611" y="10.00" width="35" height="1" fill="#ce9178" opacity="0.15"/><rect x="596" y="13.00" width="1" height="1" fill="#d4d4d4" opacity="0.27"/><rect x="596" y="12.00" width="1" height="1" fill="#d4d4d4" opacity="0.11"/><rect x="597" y="13.00" width="1" height="1" fill="#d4d4d4" opacity="0.27"/><rect x="597" y="12.00" width="1" height="1" fill="#d4d4d4" opacity="0.11"/><rect x="594" y="19.00" width="5" height="1" fill="#569cd6" opacity="0.37"/><rect x="594" y="18.00" width="5" height="1" fill="#569cd6" opacity="0.15"/><rect x="600" y="19.00" width="1" height="1" fill="#d4d4d4" opacity="0.27"/><rect x="600" y="18.00" width="1" height="1" fill="#d4d4d4" opacity="0.11"/><rect x="602" y="19.00" width="4" height="1" fill="#4fc1ff" opacity="0.37"/><rect x="602" y="18.00" width="4" height="1" fill="#4fc1ff" opacity="0.15"/><rect x="606" y="19.00" width="1" height="1" fill="#d4d4d4" opacity="0.27"/><rect x="606" y="18.00" width="1" height="1" fill="#d4d4d4" opacity="0.11"/><rect x="608" y="19.00" width="6" height="1" fill="#4fc1ff" opacity="0.37"/><rect x="608" y="18.00" width="6" height="1" fill="#4fc1ff" opacity="0.15"/><rect x="614" y="19.00" width="1" height="1" fill="#d4d4d4" opacity="0.27"/><rect x="614" y="18.00" width="1" height="1" fill="#d4d4d4" opacity="0.11"/><rect x="616" y="19.00" width="8" height="1" fill="#4fc1ff" opacity="0.37"/><rect x="616" y="18.00" width="8" height="1" fill="#4fc1ff" opacity="0.15"/><rect x="625" y="19.00" width="1" height="1" fill="#d4d4d4" opacity="0.27"/><rect x="625" y="18.00" width="1" height="1" fill="#d4d4d4" opacity="0.11"/><rect x="627" y="19.00" width="1" height="1" fill="#d4d4d4" opacity="0.27"/><rect x="627" y="18.00" width="1" height="1" fill="#d4d4d4" opacity="0.11"/><rect x="629" y="19.00" width="5" height="1" fill="#c586c0" opacity="0.37"/><rect x="629" y="18.00" width="5" height="1" fill="#c586c0" opacity="0.15"/><rect x="635" y="19.00" width="6" height="1" fill="#4fc1ff" opacity="0.37"/><rect x="635" y="18.00" width="6" height="1" fill="#4fc1ff" opacity="0.15"/><rect x="641" y="19.00" width="1" height="1" fill="#d4d4d4" opacity="0.27"/><rect x="641" y="18.00" width="1" height="1" fill="#d4d4d4" opacity="0.11"/><rect x="642" y="19.00" width="15" height="1" fill="#dcdcaa" opacity="0.37"/><rect x="642" y="18.00" width="15" height="1" fill="#dcdcaa" opacity="0.15"/><rect x="657" y="19.00" width="1" height="1" fill="#d4d4d4" opacity="0.27"/><rect x="657" y="18.00" width="1" height="1" fill="#d4d4d4" opacity="0.11"/><rect x="658" y="19.00" width="1" height="1" fill="#d4d4d4" opacity="0.27"/><rect x="658" y="18.00" width="1" height="1" fill="#d4d4d4" opacity="0.11"/><rect x="598" y="21.00" width="5" height="1" fill="#9cdcfe" opacity="0.37"/><rect x="598" y="20.00" width="5" height="1" fill="#9cdcfe" opacity="0.15"/><rect x="603" y="21.00" width="1" height="1" fill="#d4d4d4" opacity="0.27"/><rect x="603" y="20.00" width="1" height="1" fill="#d4d4d4" opacity="0.11"/><rect x="605" y="21.00" width="21" height="1" fill="#ce9178" opacity="0.37"/><rect x="605" y="20.00" width="21" height="1" fill="#ce9178" opacity="0.15"/><rect x="626" y="21.00" width="1" height="1" fill="#d4d4d4" opacity="0.27"/><rect x="626" y="20.00" width="1" height="1" fill="#d4d4d4" opacity="0.11"/><rect x="598" y="23.00" width="4" height="1" fill="#9cdcfe" opacity="0.37"/><rect x="598" y="22.00" width="4" height="1" fill="#9cdcfe" opacity="0.15"/><rect x="602" y="23.00" width="1" height="1" fill="#d4d4d4" opacity="0.27"/><rect x="602" y="22.00" width="1" height="1" fill="#d4d4d4" opacity="0.11"/><rect x="604" y="23.00" width="1" height="1" fill="#d4d4d4" opacity="0.27"/><rect x="604" y="22.00" width="1" height="1" fill="#d4d4d4" opacity="0.11"/><rect x="606" y="25.00" width="1" height="1" fill="#d4d4d4" opacity="0.27"/><rect x="606" y="24.00" width="1" height="1" fill="#d4d4d4" opacity="0.11"/><rect x="602" y="27.00" width="4" height="1" fill="#ce9178" opacity="0.37"/><rect x="602" y="26.00" width="4" height="1" fill="#ce9178" opacity="0.15"/><rect x="606" y="27.00" width="1" height="1" fill="#d4d4d4" opacity="0.27"/><rect x="606" y="26.00" width="1" height="1" fill="#d4d4d4" opacity="0.11"/><rect x="608" y="27.00" width="14" height="1" fill="#ce9178" opacity="0.37"/><rect x="608" y="26.00" width="14" height="1" fill="#ce9178" opacity="0.15"/><rect x="622" y="27.00" width="1" height="1" fill="#d4d4d4" opacity="0.27"/><rect x="622" y="26.00" width="1" height="1" fill="#d4d4d4" opacity="0.11"/><rect x="602" y="29.00" width="10" height="1" fill="#ce9178" opacity="0.37"/><rect x="602" y="28.00" width="10" height="1" fill="#ce9178" opacity="0.15"/><rect x="612" y="29.00" width="1" height="1" fill="#d4d4d4" opacity="0.27"/><rect x="612" y="28.00" width="1" height="1" fill="#d4d4d4" opacity="0.11"/><rect x="614" y="29.00" width="14" height="1" fill="#ce9178" opacity="0.37"/><rect x="614" y="28.00" width="14" height="1" fill="#ce9178" opacity="0.15"/><rect x="628" y="29.00" width="1" height="1" fill="#d4d4d4" opacity="0.27"/><rect x="628" y="28.00" width="1" height="1" fill="#d4d4d4" opacity="0.11"/><rect x="602" y="31.00" width="7" height="1" fill="#ce9178" opacity="0.37"/><rect x="602" y="30.00" width="7" height="1" fill="#ce9178" opacity="0.15"/><rect x="609" y="31.00" width="1" height="1" fill="#d4d4d4" opacity="0.27"/><rect x="609" y="30.00" width="1" height="1" fill="#d4d4d4" opacity="0.11"/><rect x="611" y="31.00" width="1" height="1" fill="#d4d4d4" opacity="0.27"/><rect x="611" y="30.00" width="1" height="1" fill="#d4d4d4" opacity="0.11"/><rect x="606" y="33.00" width="8" height="1" fill="#ce9178" opacity="0.37"/><rect x="606" y="32.00" width="8" height="1" fill="#ce9178" opacity="0.15"/><rect x="614" y="33.00" width="1" height="1" fill="#d4d4d4" opacity="0.27"/><rect x="614" y="32.00" width="1" height="1" fill="#d4d4d4" opacity="0.11"/><rect x="616" y="33.00" width="1" height="1" fill="#d4d4d4" opacity="0.27"/><rect x="616" y="32.00" width="1" height="1" fill="#d4d4d4" opacity="0.11"/><rect x="610" y="35.00" width="7" height="1" fill="#ce9178" opacity="0.37"/><rect x="610" y="34.00" width="7" height="1" fill="#ce9178" opacity="0.15"/><rect x="617" y="35.00" width="1" height="1" fill="#d4d4d4" opacity="0.27"/><rect x="617" y="34.00" width="1" height="1" fill="#d4d4d4" opacity="0.11"/><rect x="619" y="35.00" width="1" height="1" fill="#b5cea8" opacity="0.42"/><rect x="619" y="34.00" width="1" height="1" fill="#b5cea8" opacity="0.17"/><rect x="620" y="35.00" width="1" height="1" fill="#d4d4d4" opacity="0.27"/><rect x="620" y="34.00" width="1" height="1" fill="#d4d4d4" opacity="0.11"/><rect x="610" y="37.00" width="8" height="1" fill="#ce9178" opacity="0.37"/><rect x="610" y="36.00" width="8" height="1" fill="#ce9178" opacity="0.15"/><rect x="618" y="37.00" width="1" height="1" fill="#d4d4d4" opacity="0.27"/><rect x="618" y="36.00" width="1" height="1" fill="#d4d4d4" opacity="0.11"/><rect x="620" y="37.00" width="3" height="1" fill="#b5cea8" opacity="0.42"/><rect x="620" y="36.00" width="3" height="1" fill="#b5cea8" opacity="0.17"/><rect x="623" y="37.00" width="1" height="1" fill="#d4d4d4" opacity="0.27"/><rect x="623" y="36.00" width="1" height="1" fill="#d4d4d4" opacity="0.11"/><rect x="610" y="39.00" width="4" height="1" fill="#ce9178" opacity="0.37"/><rect x="610" y="38.00" width="4" height="1" fill="#ce9178" opacity="0.15"/><rect x="614" y="39.00" width="1" height="1" fill="#d4d4d4" opacity="0.27"/><rect x="614" y="38.00" width="1" height="1" fill="#d4d4d4" opacity="0.11"/><rect x="616" y="39.00" width="3" height="1" fill="#b5cea8" opacity="0.42"/><rect x="616" y="38.00" width="3" height="1" fill="#b5cea8" opacity="0.17"/><rect x="619" y="39.00" width="1" height="1" fill="#d4d4d4" opacity="0.27"/><rect x="619" y="38.00" width="1" height="1" fill="#d4d4d4" opacity="0.11"/><rect x="610" y="41.00" width="6" height="1" fill="#ce9178" opacity="0.37"/><rect x="610" y="40.00" width="6" height="1" fill="#ce9178" opacity="0.15"/><rect x="616" y="41.00" width="1" height="1" fill="#d4d4d4" opacity="0.27"/><rect x="616" y="40.00" width="1" height="1" fill="#d4d4d4" opacity="0.11"/><rect x="618" y="41.00" width="1" height="1" fill="#b5cea8" opacity="0.42"/><rect x="618" y="40.00" width="1" height="1" fill="#b5cea8" opacity="0.17"/><rect x="619" y="41.00" width="1" height="1" fill="#d4d4d4" opacity="0.27"/><rect x="619" y="40.00" width="1" height="1" fill="#d4d4d4" opacity="0.11"/><rect x="610" y="43.00" width="6" height="1" fill="#ce9178" opacity="0.37"/><rect x="610" y="42.00" width="6" height="1" fill="#ce9178" opacity="0.15"/><rect x="616" y="43.00" width="1" height="1" fill="#d4d4d4" opacity="0.27"/><rect x="616" y="42.00" width="1" height="1" fill="#d4d4d4" opacity="0.11"/><rect x="618" y="43.00" width="4" height="1" fill="#569cd6" opacity="0.37"/><rect x="618" y="42.00" width="4" height="1" fill="#569cd6" opacity="0.15"/><rect x="606" y="45.00" width="1" height="1" fill="#d4d4d4" opacity="0.27"/><rect x="606" y="44.00" width="1" height="1" fill="#d4d4d4" opacity="0.11"/><rect x="607" y="45.00" width="1" height="1" fill="#d4d4d4" opacity="0.27"/><rect x="607" y="44.00" width="1" height="1" fill="#d4d4d4" opacity="0.11"/><rect x="606" y="47.00" width="7" height="1" fill="#ce9178" opacity="0.37"/><rect x="606" y="46.00" width="7" height="1" fill="#ce9178" opacity="0.15"/><rect x="613" y="47.00" width="1" height="1" fill="#d4d4d4" opacity="0.27"/><rect x="613" y="46.00" width="1" height="1" fill="#d4d4d4" opacity="0.11"/><rect x="615" y="47.00" width="1" height="1" fill="#d4d4d4" opacity="0.27"/><rect x="615" y="46.00" width="1" height="1" fill="#d4d4d4" opacity="0.11"/><rect x="610" y="49.00" width="7" height="1" fill="#ce9178" opacity="0.37"/><rect x="610" y="48.00" width="7" height="1" fill="#ce9178" opacity="0.15"/><rect x="617" y="49.00" width="1" height="1" fill="#d4d4d4" opacity="0.27"/><rect x="617" y="48.00" width="1" height="1" fill="#d4d4d4" opacity="0.11"/><rect x="619" y="49.00" width="4" height="1" fill="#b5cea8" opacity="0.42"/><rect x="619" y="48.00" width="4" height="1" fill="#b5cea8" opacity="0.17"/><rect x="623" y="49.00" width="1" height="1" fill="#d4d4d4" opacity="0.27"/><rect x="623" y="48.00" width="1" height="1" fill="#d4d4d4" opacity="0.11"/><rect x="610" y="51.00" width="8" height="1" fill="#ce9178" opacity="0.37"/><rect x="610" y="50.00" width="8" height="1" fill="#ce9178" opacity="0.15"/><rect x="618" y="51.00" width="1" height="1" fill="#d4d4d4" opacity="0.27"/><rect x="618" y="50.00" width="1" height="1" fill="#d4d4d4" opacity="0.11"/><rect x="620" y="51.00" width="4" height="1" fill="#b5cea8" opacity="0.42"/><rect x="620" y="50.00" width="4" height="1" fill="#b5cea8" opacity="0.17"/><rect x="624" y="51.00" width="1" height="1" fill="#d4d4d4" opacity="0.27"/><rect x="624" y="50.00" width="1" height="1" fill="#d4d4d4" opacity="0.11"/><rect x="610" y="53.00" width="4" height="1" fill="#ce9178" opacity="0.37"/><rect x="610" y="52.00" width="4" height="1" fill="#ce9178" opacity="0.15"/><rect x="614" y="53.00" width="1" height="1" fill="#d4d4d4" opacity="0.27"/><rect x="614" y="52.00" width="1" height="1" fill="#d4d4d4" opacity="0.11"/><rect x="616" y="53.00" width="3" height="1" fill="#b5cea8" opacity="0.42"/><rect x="616" y="52.00" width="3" height="1" fill="#b5cea8" opacity="0.17"/><rect x="619" y="53.00" width="1" height="1" fill="#d4d4d4" opacity="0.27"/><rect x="619" y="52.00" width="1" height="1" fill="#d4d4d4" opacity="0.11"/><rect x="610" y="55.00" width="6" height="1" fill="#ce9178" opacity="0.37"/><rect x="610" y="54.00" width="6" height="1" fill="#ce9178" opacity="0.15"/><rect x="616" y="55.00" width="1" height="1" fill="#d4d4d4" opacity="0.27"/><rect x="616" y="54.00" width="1" height="1" fill="#d4d4d4" opacity="0.11"/><rect x="618" y="55.00" width="3" height="1" fill="#b5cea8" opacity="0.42"/><rect x="618" y="54.00" width="3" height="1" fill="#b5cea8" opacity="0.17"/><rect x="621" y="55.00" width="1" height="1" fill="#d4d4d4" opacity="0.27"/><rect x="621" y="54.00" width="1" height="1" fill="#d4d4d4" opacity="0.11"/><rect x="610" y="57.00" width="6" height="1" fill="#ce9178" opacity="0.37"/><rect x="610" y="56.00" width="6" height="1" fill="#ce9178" opacity="0.15"/><rect x="616" y="57.00" width="1" height="1" fill="#d4d4d4" opacity="0.27"/><rect x="616" y="56.00" width="1" height="1" fill="#d4d4d4" opacity="0.11"/><rect x="618" y="57.00" width="4" height="1" fill="#569cd6" opacity="0.37"/><rect x="618" y="56.00" width="4" height="1" fill="#569cd6" opacity="0.15"/><rect x="606" y="59.00" width="1" height="1" fill="#d4d4d4" opacity="0.27"/><rect x="606" y="58.00" width="1" height="1" fill="#d4d4d4" opacity="0.11"/><rect x="607" y="59.00" width="1" height="1" fill="#d4d4d4" opacity="0.27"/><rect x="607" y="58.00" width="1" height="1" fill="#d4d4d4" opacity="0.11"/><rect x="606" y="61.00" width="7" height="1" fill="#ce9178" opacity="0.37"/><rect x="606" y="60.00" width="7" height="1" fill="#ce9178" opacity="0.15"/><rect x="613" y="61.00" width="1" height="1" fill="#d4d4d4" opacity="0.27"/><rect x="613" y="60.00" width="1" height="1" fill="#d4d4d4" opacity="0.11"/><rect x="615" y="61.00" width="1" height="1" fill="#d4d4d4" opacity="0.27"/><rect x="615" y="60.00" width="1" height="1" fill="#d4d4d4" opacity="0.11"/><rect x="610" y="63.00" width="7" height="1" fill="#ce9178" opacity="0.37"/><rect x="610" y="62.00" width="7" height="1" fill="#ce9178" opacity="0.15"/><rect x="617" y="63.00" width="1" height="1" fill="#d4d4d4" opacity="0.27"/><rect x="617" y="62.00" width="1" height="1" fill="#d4d4d4" opacity="0.11"/><rect x="619" y="63.00" width="3" height="1" fill="#b5cea8" opacity="0.42"/><rect x="619" y="62.00" width="3" height="1" fill="#b5cea8" opacity="0.17"/><rect x="622" y="63.00" width="1" height="1" fill="#d4d4d4" opacity="0.27"/><rect x="622" y="62.00" width="1" height="1" fill="#d4d4d4" opacity="0.11"/><rect x="610" y="65.00" width="8" height="1" fill="#ce9178" opacity="0.37"/><rect x="610" y="64.00" width="8" height="1" fill="#ce9178" opacity="0.15"/><rect x="618" y="65.00" width="1" height="1" fill="#d4d4d4" opacity="0.27"/><rect x="618" y="64.00" width="1" height="1" fill="#d4d4d4" opacity="0.11"/><rect x="620" y="65.00" width="4" height="1" fill="#b5cea8" opacity="0.42"/><rect x="620" y="64.00" width="4" height="1" fill="#b5cea8" opacity="0.17"/><rect x="624" y="65.00" width="1" height="1" fill="#d4d4d4" opacity="0.27"/><rect x="624" y="64.00" width="1" height="1" fill="#d4d4d4" opacity="0.11"/><rect x="610" y="67.00" width="4" height="1" fill="#ce9178" opacity="0.37"/><rect x="610" y="66.00" width="4" height="1" fill="#ce9178" opacity="0.15"/><rect x="614" y="67.00" width="1" height="1" fill="#d4d4d4" opacity="0.27"/><rect x="614" y="66.00" width="1" height="1" fill="#d4d4d4" opacity="0.11"/><rect x="616" y="67.00" width="2" height="1" fill="#b5cea8" opacity="0.42"/><rect x="616" y="66.00" width="2" height="1" fill="#b5cea8" opacity="0.17"/><rect x="618" y="67.00" width="1" height="1" fill="#d4d4d4" opacity="0.27"/><rect x="618" y="66.00" width="1" height="1" fill="#d4d4d4" opacity="0.11"/><rect x="610" y="69.00" width="6" height="1" fill="#ce9178" opacity="0.37"/><rect x="610" y="68.00" width="6" height="1" fill="#ce9178" opacity="0.15"/><rect x="616" y="69.00" width="1" height="1" fill="#d4d4d4" opacity="0.27"/><rect x="616" y="68.00" width="1" height="1" fill="#d4d4d4" opacity="0.11"/><rect x="618" y="69.00" width="2" height="1" fill="#b5cea8" opacity="0.42"/><rect x="618" y="68.00" width="2" height="1" fill="#b5cea8" opacity="0.17"/><rect x="606" y="71.00" width="1" height="1" fill="#d4d4d4" opacity="0.27"/><rect x="606" y="70.00" width="1" height="1" fill="#d4d4d4" opacity="0.11"/><rect x="607" y="71.00" width="1" height="1" fill="#d4d4d4" opacity="0.27"/><rect x="607" y="70.00" width="1" height="1" fill="#d4d4d4" opacity="0.11"/><rect x="606" y="73.00" width="11" height="1" fill="#ce9178" opacity="0.37"/><rect x="606" y="72.00" width="11" height="1" fill="#ce9178" opacity="0.15"/><rect x="617" y="73.00" width="1" height="1" fill="#d4d4d4" opacity="0.27"/><rect x="617" y="72.00" width="1" height="1" fill="#d4d4d4" opacity="0.11"/><rect x="619" y="73.00" width="1" height="1" fill="#d4d4d4" opacity="0.27"/><rect x="619" y="72.00" width="1" height="1" fill="#d4d4d4" opacity="0.11"/><rect x="610" y="75.00" width="7" height="1" fill="#ce9178" opacity="0.37"/><rect x="610" y="74.00" width="7" height="1" fill="#ce9178" opacity="0.15"/><rect x="617" y="75.00" width="1" height="1" fill="#d4d4d4" opacity="0.27"/><rect x="617" y="74.00" width="1" height="1" fill="#d4d4d4" opacity="0.11"/><rect x="619" y="75.00" width="1" height="1" fill="#b5cea8" opacity="0.42"/><rect x="619" y="74.00" width="1" height="1" fill="#b5cea8" opacity="0.17"/><rect x="620" y="75.00" width="1" height="1" fill="#d4d4d4" opacity="0.27"/><rect x="620" y="74.00" width="1" height="1" fill="#d4d4d4" opacity="0.11"/><rect x="610" y="77.00" width="8" height="1" fill="#ce9178" opacity="0.37"/><rect x="610" y="76.00" width="8" height="1" fill="#ce9178" opacity="0.15"/><rect x="618" y="77.00" width="1" height="1" fill="#d4d4d4" opacity="0.27"/><rect x="618" y="76.00" width="1" height="1" fill="#d4d4d4" opacity="0.11"/><rect x="620" y="77.00" width="4" height="1" fill="#b5cea8" opacity="0.42"/><rect x="620" y="76.00" width="4" height="1" fill="#b5cea8" opacity="0.17"/><rect x="624" y="77.00" width="1" height="1" fill="#d4d4d4" opacity="0.27"/><rect x="624" y="76.00" width="1" height="1" fill="#d4d4d4" opacity="0.11"/><rect x="610" y="79.00" width="4" height="1" fill="#ce9178" opacity="0.37"/><rect x="610" y="78.00" width="4" height="1" fill="#ce9178" opacity="0.15"/><rect x="614" y="79.00" width="1" height="1" fill="#d4d4d4" opacity="0.27"/><rect x="614" y="78.00" width="1" height="1" fill="#d4d4d4" opacity="0.11"/><rect x="616" y="79.00" width="3" height="1" fill="#b5cea8" opacity="0.42"/><rect x="616" y="78.00" width="3" height="1" fill="#b5cea8" opacity="0.17"/><rect x="619" y="79.00" width="1" height="1" fill="#d4d4d4" opacity="0.27"/><rect x="619" y="78.00" width="1" height="1" fill="#d4d4d4" opacity="0.11"/><rect x="610" y="81.00" width="6" height="1" fill="#ce9178" opacity="0.37"/><rect x="610" y="80.00" width="6" height="1" fill="#ce9178" opacity="0.15"/><rect x="616" y="81.00" width="1" height="1" fill="#d4d4d4" opacity="0.27"/><rect x="616" y="80.00" width="1" height="1" fill="#d4d4d4" opacity="0.11"/><rect x="618" y="81.00" width="1" height="1" fill="#b5cea8" opacity="0.42"/><rect x="618" y="80.00" width="1" height="1" fill="#b5cea8" opacity="0.17"/><rect x="619" y="81.00" width="1" height="1" fill="#d4d4d4" opacity="0.27"/><rect x="619" y="80.00" width="1" height="1" fill="#d4d4d4" opacity="0.11"/><rect x="610" y="83.00" width="6" height="1" fill="#ce9178" opacity="0.37"/><rect x="610" y="82.00" width="6" height="1" fill="#ce9178" opacity="0.15"/><rect x="616" y="83.00" width="1" height="1" fill="#d4d4d4" opacity="0.27"/><rect x="616" y="82.00" width="1" height="1" fill="#d4d4d4" opacity="0.11"/><rect x="618" y="83.00" width="4" height="1" fill="#569cd6" opacity="0.37"/><rect x="618" y="82.00" width="4" height="1" fill="#569cd6" opacity="0.15"/><rect x="606" y="85.00" width="1" height="1" fill="#d4d4d4" opacity="0.27"/><rect x="606" y="84.00" width="1" height="1" fill="#d4d4d4" opacity="0.11"/><rect x="607" y="85.00" width="1" height="1" fill="#d4d4d4" opacity="0.27"/><rect x="607" y="84.00" width="1" height="1" fill="#d4d4d4" opacity="0.11"/><rect x="606" y="87.00" width="16" height="1" fill="#ce9178" opacity="0.37"/><rect x="606" y="86.00" width="16" height="1" fill="#ce9178" opacity="0.15"/><rect x="622" y="87.00" width="1" height="1" fill="#d4d4d4" opacity="0.27"/><rect x="622" y="86.00" width="1" height="1" fill="#d4d4d4" opacity="0.11"/><rect x="624" y="87.00" width="1" height="1" fill="#d4d4d4" opacity="0.27"/><rect x="624" y="86.00" width="1" height="1" fill="#d4d4d4" opacity="0.11"/><rect x="610" y="89.00" width="7" height="1" fill="#ce9178" opacity="0.37"/><rect x="610" y="88.00" width="7" height="1" fill="#ce9178" opacity="0.15"/><rect x="617" y="89.00" width="1" height="1" fill="#d4d4d4" opacity="0.27"/><rect x="617" y="88.00" width="1" height="1" fill="#d4d4d4" opacity="0.11"/><rect x="619" y="89.00" width="1" height="1" fill="#b5cea8" opacity="0.42"/><rect x="619" y="88.00" width="1" height="1" fill="#b5cea8" opacity="0.17"/><rect x="620" y="89.00" width="1" height="1" fill="#d4d4d4" opacity="0.27"/><rect x="620" y="88.00" width="1" height="1" fill="#d4d4d4" opacity="0.11"/><rect x="610" y="91.00" width="8" height="1" fill="#ce9178" opacity="0.37"/><rect x="610" y="90.00" width="8" height="1" fill="#ce9178" opacity="0.15"/><rect x="618" y="91.00" width="1" height="1" fill="#d4d4d4" opacity="0.27"/><rect x="618" y="90.00" width="1" height="1" fill="#d4d4d4" opacity="0.11"/><rect x="620" y="91.00" width="4" height="1" fill="#b5cea8" opacity="0.42"/><rect x="620" y="90.00" width="4" height="1" fill="#b5cea8" opacity="0.17"/><rect x="624" y="91.00" width="1" height="1" fill="#d4d4d4" opacity="0.27"/><rect x="624" y="90.00" width="1" height="1" fill="#d4d4d4" opacity="0.11"/><rect x="610" y="93.00" width="4" height="1" fill="#ce9178" opacity="0.37"/><rect x="610" y="92.00" width="4" height="1" fill="#ce9178" opacity="0.15"/><rect x="614" y="93.00" width="1" height="1" fill="#d4d4d4" opacity="0.27"/><rect x="614" y="92.00" width="1" height="1" fill="#d4d4d4" opacity="0.11"/><rect x="616" y="93.00" width="3" height="1" fill="#b5cea8" opacity="0.42"/><rect x="616" y="92.00" width="3" height="1" fill="#b5cea8" opacity="0.17"/><rect x="619" y="93.00" width="1" height="1" fill="#d4d4d4" opacity="0.27"/><rect x="619" y="92.00" width="1" height="1" fill="#d4d4d4" opacity="0.11"/><rect x="610" y="95.00" width="6" height="1" fill="#ce9178" opacity="0.37"/><rect x="610" y="94.00" width="6" height="1" fill="#ce9178" opacity="0.15"/><rect x="616" y="95.00" width="1" height="1" fill="#d4d4d4" opacity="0.27"/><rect x="616" y="94.00" width="1" height="1" fill="#d4d4d4" opacity="0.11"/><rect x="618" y="95.00" width="1" height="1" fill="#b5cea8" opacity="0.42"/><rect x="618" y="94.00" width="1" height="1" fill="#b5cea8" opacity="0.17"/><rect x="619" y="95.00" width="1" height="1" fill="#d4d4d4" opacity="0.27"/><rect x="619" y="94.00" width="1" height="1" fill="#d4d4d4" opacity="0.11"/><rect x="610" y="97.00" width="6" height="1" fill="#ce9178" opacity="0.37"/><rect x="610" y="96.00" width="6" height="1" fill="#ce9178" opacity="0.15"/><rect x="616" y="97.00" width="1" height="1" fill="#d4d4d4" opacity="0.27"/><rect x="616" y="96.00" width="1" height="1" fill="#d4d4d4" opacity="0.11"/><rect x="618" y="97.00" width="4" height="1" fill="#569cd6" opacity="0.37"/><rect x="618" y="96.00" width="4" height="1" fill="#569cd6" opacity="0.15"/><rect x="606" y="99.00" width="1" height="1" fill="#d4d4d4" opacity="0.27"/><rect x="606" y="98.00" width="1" height="1" fill="#d4d4d4" opacity="0.11"/><rect x="607" y="99.00" width="1" height="1" fill="#d4d4d4" opacity="0.27"/><rect x="607" y="98.00" width="1" height="1" fill="#d4d4d4" opacity="0.11"/><rect x="606" y="101.00" width="10" height="1" fill="#ce9178" opacity="0.37"/><rect x="606" y="100.00" width="10" height="1" fill="#ce9178" opacity="0.15"/><rect x="616" y="101.00" width="1" height="1" fill="#d4d4d4" opacity="0.27"/><rect x="616" y="100.00" width="1" height="1" fill="#d4d4d4" opacity="0.11"/><rect x="618" y="101.00" width="1" height="1" fill="#d4d4d4" opacity="0.27"/><rect x="618" y="100.00" width="1" height="1" fill="#d4d4d4" opacity="0.11"/><rect x="610" y="103.00" width="7" height="1" fill="#ce9178" opacity="0.37"/><rect x="610" y="102.00" width="7" height="1" fill="#ce9178" opacity="0.15"/><rect x="617" y="103.00" width="1" height="1" fill="#d4d4d4" opacity="0.27"/><rect x="617" y="102.00" width="1" height="1" fill="#d4d4d4" opacity="0.11"/><rect x="619" y="103.00" width="3" height="1" fill="#b5cea8" opacity="0.42"/><rect x="619" y="102.00" width="3" height="1" fill="#b5cea8" opacity="0.17"/><rect x="622" y="103.00" width="1" height="1" fill="#d4d4d4" opacity="0.27"/><rect x="622" y="102.00" width="1" height="1" fill="#d4d4d4" opacity="0.11"/><rect x="610" y="105.00" width="8" height="1" fill="#ce9178" opacity="0.37"/><rect x="610" y="104.00" width="8" height="1" fill="#ce9178" opacity="0.15"/><rect x="618" y="105.00" width="1" height="1" fill="#d4d4d4" opacity="0.27"/><rect x="618" y="104.00" width="1" height="1" fill="#d4d4d4" opacity="0.11"/><rect x="620" y="105.00" width="4" height="1" fill="#b5cea8" opacity="0.42"/><rect x="620" y="104.00" width="4" height="1" fill="#b5cea8" opacity="0.17"/><rect x="624" y="105.00" width="1" height="1" fill="#d4d4d4" opacity="0.27"/><rect x="624" y="104.00" width="1" height="1" fill="#d4d4d4" opacity="0.11"/><rect x="610" y="107.00" width="4" height="1" fill="#ce9178" opacity="0.37"/><rect x="610" y="106.00" width="4" height="1" fill="#ce9178" opacity="0.15"/><rect x="614" y="107.00" width="1" height="1" fill="#d4d4d4" opacity="0.27"/><rect x="614" y="106.00" width="1" height="1" fill="#d4d4d4" opacity="0.11"/><rect x="616" y="107.00" width="2" height="1" fill="#b5cea8" opacity="0.42"/><rect x="616" y="106.00" width="2" height="1" fill="#b5cea8" opacity="0.17"/><rect x="618" y="107.00" width="1" height="1" fill="#d4d4d4" opacity="0.27"/><rect x="618" y="106.00" width="1" height="1" fill="#d4d4d4" opacity="0.11"/><rect x="610" y="109.00" width="6" height="1" fill="#ce9178" opacity="0.37"/><rect x="610" y="108.00" width="6" height="1" fill="#ce9178" opacity="0.15"/><rect x="616" y="109.00" width="1" height="1" fill="#d4d4d4" opacity="0.27"/><rect x="616" y="108.00" width="1" height="1" fill="#d4d4d4" opacity="0.11"/><rect x="618" y="109.00" width="1" height="1" fill="#b5cea8" opacity="0.42"/><rect x="618" y="108.00" width="1" height="1" fill="#b5cea8" opacity="0.17"/><rect x="606" y="111.00" width="1" height="1" fill="#d4d4d4" opacity="0.27"/><rect x="606" y="110.00" width="1" height="1" fill="#d4d4d4" opacity="0.11"/><rect x="607" y="111.00" width="1" height="1" fill="#d4d4d4" opacity="0.27"/><rect x="607" y="110.00" width="1" height="1" fill="#d4d4d4" opacity="0.11"/><rect x="606" y="113.00" width="8" height="1" fill="#ce9178" opacity="0.37"/><rect x="606" y="112.00" width="8" height="1" fill="#ce9178" opacity="0.15"/><rect x="614" y="113.00" width="1" height="1" fill="#d4d4d4" opacity="0.27"/><rect x="614" y="112.00" width="1" height="1" fill="#d4d4d4" opacity="0.11"/><rect x="616" y="113.00" width="1" height="1" fill="#d4d4d4" opacity="0.27"/><rect x="616" y="112.00" width="1" height="1" fill="#d4d4d4" opacity="0.11"/><rect x="610" y="115.00" width="7" height="1" fill="#ce9178" opacity="0.37"/><rect x="610" y="114.00" width="7" height="1" fill="#ce9178" opacity="0.15"/><rect x="617" y="115.00" width="1" height="1" fill="#d4d4d4" opacity="0.27"/><rect x="617" y="114.00" width="1" height="1" fill="#d4d4d4" opacity="0.11"/><rect x="619" y="115.00" width="1" height="1" fill="#b5cea8" opacity="0.42"/><rect x="619" y="114.00" width="1" height="1" fill="#b5cea8" opacity="0.17"/><rect x="620" y="115.00" width="1" height="1" fill="#d4d4d4" opacity="0.27"/><rect x="620" y="114.00" width="1" height="1" fill="#d4d4d4" opacity="0.11"/><rect x="610" y="117.00" width="8" height="1" fill="#ce9178" opacity="0.37"/><rect x="610" y="116.00" width="8" height="1" fill="#ce9178" opacity="0.15"/><rect x="618" y="117.00" width="1" height="1" fill="#d4d4d4" opacity="0.27"/><rect x="618" y="116.00" width="1" height="1" fill="#d4d4d4" opacity="0.11"/><rect x="620" y="117.00" width="4" height="1" fill="#b5cea8" opacity="0.42"/><rect x="620" y="116.00" width="4" height="1" fill="#b5cea8" opacity="0.17"/><rect x="606" y="119.00" width="1" height="1" fill="#d4d4d4" opacity="0.27"/><rect x="606" y="118.00" width="1" height="1" fill="#d4d4d4" opacity="0.11"/><rect x="602" y="121.00" width="1" height="1" fill="#d4d4d4" opacity="0.27"/><rect x="602" y="120.00" width="1" height="1" fill="#d4d4d4" opacity="0.11"/><rect x="603" y="121.00" width="1" height="1" fill="#d4d4d4" opacity="0.27"/><rect x="603" y="120.00" width="1" height="1" fill="#d4d4d4" opacity="0.11"/><rect x="602" y="123.00" width="11" height="1" fill="#ce9178" opacity="0.37"/><rect x="602" y="122.00" width="11" height="1" fill="#ce9178" opacity="0.15"/><rect x="613" y="123.00" width="1" height="1" fill="#d4d4d4" opacity="0.27"/><rect x="613" y="122.00" width="1" height="1" fill="#d4d4d4" opacity="0.11"/><rect x="615" y="123.00" width="13" height="1" fill="#b5cea8" opacity="0.42"/><rect x="615" y="122.00" width="13" height="1" fill="#b5cea8" opacity="0.17"/><rect x="628" y="123.00" width="1" height="1" fill="#d4d4d4" opacity="0.27"/><rect x="628" y="122.00" width="1" height="1" fill="#d4d4d4" opacity="0.11"/><rect x="602" y="125.00" width="8" height="1" fill="#ce9178" opacity="0.37"/><rect x="602" y="124.00" width="8" height="1" fill="#ce9178" opacity="0.15"/><rect x="610" y="125.00" width="1" height="1" fill="#d4d4d4" opacity="0.27"/><rect x="610" y="124.00" width="1" height="1" fill="#d4d4d4" opacity="0.11"/><rect x="612" y="125.00" width="13" height="1" fill="#b5cea8" opacity="0.42"/><rect x="612" y="124.00" width="13" height="1" fill="#b5cea8" opacity="0.17"/><rect x="625" y="125.00" width="1" height="1" fill="#d4d4d4" opacity="0.27"/><rect x="625" y="124.00" width="1" height="1" fill="#d4d4d4" opacity="0.11"/><rect x="602" y="127.00" width="10" height="1" fill="#ce9178" opacity="0.37"/><rect x="602" y="126.00" width="10" height="1" fill="#ce9178" opacity="0.15"/><rect x="612" y="127.00" width="1" height="1" fill="#d4d4d4" opacity="0.27"/><rect x="612" y="126.00" width="1" height="1" fill="#d4d4d4" opacity="0.11"/><rect x="614" y="127.00" width="1" height="1" fill="#d4d4d4" opacity="0.27"/><rect x="614" y="126.00" width="1" height="1" fill="#d4d4d4" opacity="0.11"/><rect x="606" y="129.00" width="7" height="1" fill="#ce9178" opacity="0.37"/><rect x="606" y="128.00" width="7" height="1" fill="#ce9178" opacity="0.15"/><rect x="613" y="129.00" width="1" height="1" fill="#d4d4d4" opacity="0.27"/><rect x="613" y="128.00" width="1" height="1" fill="#d4d4d4" opacity="0.11"/><rect x="615" y="129.00" width="7" height="1" fill="#b5cea8" opacity="0.42"/><rect x="615" y="128.00" width="7" height="1" fill="#b5cea8" opacity="0.17"/><rect x="622" y="129.00" width="1" height="1" fill="#d4d4d4" opacity="0.27"/><rect x="622" y="128.00" width="1" height="1" fill="#d4d4d4" opacity="0.11"/><rect x="606" y="131.00" width="4" height="1" fill="#ce9178" opacity="0.37"/><rect x="606" y="130.00" width="4" height="1" fill="#ce9178" opacity="0.15"/><rect x="610" y="131.00" width="1" height="1" fill="#d4d4d4" opacity="0.27"/><rect x="610" y="130.00" width="1" height="1" fill="#d4d4d4" opacity="0.11"/><rect x="612" y="131.00" width="1" height="1" fill="#b5cea8" opacity="0.42"/><rect x="612" y="130.00" width="1" height="1" fill="#b5cea8" opacity="0.17"/><rect x="602" y="133.00" width="1" height="1" fill="#d4d4d4" opacity="0.27"/><rect x="602" y="132.00" width="1" height="1" fill="#d4d4d4" opacity="0.11"/><rect x="603" y="133.00" width="1" height="1" fill="#d4d4d4" opacity="0.27"/><rect x="603" y="132.00" width="1" height="1" fill="#d4d4d4" opacity="0.11"/><rect x="602" y="135.00" width="5" height="1" fill="#ce9178" opacity="0.37"/><rect x="602" y="134.00" width="5" height="1" fill="#ce9178" opacity="0.15"/><rect x="607" y="135.00" width="1" height="1" fill="#d4d4d4" opacity="0.27"/><rect x="607" y="134.00" width="1" height="1" fill="#d4d4d4" opacity="0.11"/><rect x="609" y="135.00" width="36" height="1" fill="#ce9178" opacity="0.37"/><rect x="609" y="134.00" width="36" height="1" fill="#ce9178" opacity="0.15"/><rect x="645" y="135.00" width="1" height="1" fill="#d4d4d4" opacity="0.27"/><rect x="645" y="134.00" width="1" height="1" fill="#d4d4d4" opacity="0.11"/><rect x="602" y="137.00" width="7" height="1" fill="#ce9178" opacity="0.37"/><rect x="602" y="136.00" width="7" height="1" fill="#ce9178" opacity="0.15"/><rect x="609" y="137.00" width="1" height="1" fill="#d4d4d4" opacity="0.27"/><rect x="609" y="136.00" width="1" height="1" fill="#d4d4d4" opacity="0.11"/><rect x="611" y="137.00" width="1" height="1" fill="#d4d4d4" opacity="0.27"/><rect x="611" y="136.00" width="1" height="1" fill="#d4d4d4" opacity="0.11"/><rect x="606" y="139.00" width="5" height="1" fill="#ce9178" opacity="0.37"/><rect x="606" y="138.00" width="5" height="1" fill="#ce9178" opacity="0.15"/><rect x="611" y="139.00" width="1" height="1" fill="#d4d4d4" opacity="0.27"/><rect x="611" y="138.00" width="1" height="1" fill="#d4d4d4" opacity="0.11"/><rect x="613" y="139.00" width="4" height="1" fill="#b5cea8" opacity="0.42"/><rect x="613" y="138.00" width="4" height="1" fill="#b5cea8" opacity="0.17"/><rect x="617" y="139.00" width="1" height="1" fill="#d4d4d4" opacity="0.27"/><rect x="617" y="138.00" width="1" height="1" fill="#d4d4d4" opacity="0.11"/><rect x="606" y="141.00" width="7" height="1" fill="#ce9178" opacity="0.37"/><rect x="606" y="140.00" width="7" height="1" fill="#ce9178" opacity="0.15"/><rect x="613" y="141.00" width="1" height="1" fill="#d4d4d4" opacity="0.27"/><rect x="613" y="140.00" width="1" height="1" fill="#d4d4d4" opacity="0.11"/><rect x="615" y="141.00" width="4" height="1" fill="#b5cea8" opacity="0.42"/><rect x="615" y="140.00" width="4" height="1" fill="#b5cea8" opacity="0.17"/><rect x="619" y="141.00" width="1" height="1" fill="#d4d4d4" opacity="0.27"/><rect x="619" y="140.00" width="1" height="1" fill="#d4d4d4" opacity="0.11"/><rect x="606" y="143.00" width="4" height="1" fill="#ce9178" opacity="0.37"/><rect x="606" y="142.00" width="4" height="1" fill="#ce9178" opacity="0.15"/><rect x="610" y="143.00" width="1" height="1" fill="#d4d4d4" opacity="0.27"/><rect x="610" y="142.00" width="1" height="1" fill="#d4d4d4" opacity="0.11"/><rect x="612" y="143.00" width="1" height="1" fill="#b5cea8" opacity="0.42"/><rect x="612" y="142.00" width="1" height="1" fill="#b5cea8" opacity="0.17"/><rect x="613" y="143.00" width="1" height="1" fill="#d4d4d4" opacity="0.27"/><rect x="613" y="142.00" width="1" height="1" fill="#d4d4d4" opacity="0.11"/><rect x="606" y="145.00" width="6" height="1" fill="#ce9178" opacity="0.37"/><rect x="606" y="144.00" width="6" height="1" fill="#ce9178" opacity="0.15"/><rect x="612" y="145.00" width="1" height="1" fill="#d4d4d4" opacity="0.27"/><rect x="612" y="144.00" width="1" height="1" fill="#d4d4d4" opacity="0.11"/><rect x="614" y="145.00" width="2" height="1" fill="#b5cea8" opacity="0.42"/><rect x="614" y="144.00" width="2" height="1" fill="#b5cea8" opacity="0.17"/><rect x="616" y="145.00" width="1" height="1" fill="#d4d4d4" opacity="0.27"/><rect x="616" y="144.00" width="1" height="1" fill="#d4d4d4" opacity="0.11"/><rect x="606" y="147.00" width="7" height="1" fill="#ce9178" opacity="0.37"/><rect x="606" y="146.00" width="7" height="1" fill="#ce9178" opacity="0.15"/><rect x="613" y="147.00" width="1" height="1" fill="#d4d4d4" opacity="0.27"/><rect x="613" y="146.00" width="1" height="1" fill="#d4d4d4" opacity="0.11"/><rect x="615" y="147.00" width="2" height="1" fill="#b5cea8" opacity="0.42"/><rect x="615" y="146.00" width="2" height="1" fill="#b5cea8" opacity="0.17"/><rect x="617" y="147.00" width="1" height="1" fill="#d4d4d4" opacity="0.27"/><rect x="617" y="146.00" width="1" height="1" fill="#d4d4d4" opacity="0.11"/><rect x="606" y="149.00" width="6" height="1" fill="#ce9178" opacity="0.37"/><rect x="606" y="148.00" width="6" height="1" fill="#ce9178" opacity="0.15"/><rect x="612" y="149.00" width="1" height="1" fill="#d4d4d4" opacity="0.27"/><rect x="612" y="148.00" width="1" height="1" fill="#d4d4d4" opacity="0.11"/><rect x="614" y="149.00" width="3" height="1" fill="#b5cea8" opacity="0.42"/><rect x="614" y="148.00" width="3" height="1" fill="#b5cea8" opacity="0.17"/><rect x="617" y="149.00" width="1" height="1" fill="#d4d4d4" opacity="0.27"/><rect x="617" y="148.00" width="1" height="1" fill="#d4d4d4" opacity="0.11"/><rect x="606" y="151.00" width="7" height="1" fill="#ce9178" opacity="0.37"/><rect x="606" y="150.00" width="7" height="1" fill="#ce9178" opacity="0.15"/><rect x="613" y="151.00" width="1" height="1" fill="#d4d4d4" opacity="0.27"/><rect x="613" y="150.00" width="1" height="1" fill="#d4d4d4" opacity="0.11"/><rect x="615" y="151.00" width="3" height="1" fill="#b5cea8" opacity="0.42"/><rect x="615" y="150.00" width="3" height="1" fill="#b5cea8" opacity="0.17"/><rect x="618" y="151.00" width="1" height="1" fill="#d4d4d4" opacity="0.27"/><rect x="618" y="150.00" width="1" height="1" fill="#d4d4d4" opacity="0.11"/><rect x="606" y="153.00" width="5" height="1" fill="#ce9178" opacity="0.37"/><rect x="606" y="152.00" width="5" height="1" fill="#ce9178" opacity="0.15"/><rect x="611" y="153.00" width="1" height="1" fill="#d4d4d4" opacity="0.27"/><rect x="611" y="152.00" width="1" height="1" fill="#d4d4d4" opacity="0.11"/><rect x="613" y="153.00" width="3" height="1" fill="#b5cea8" opacity="0.42"/><rect x="613" y="152.00" width="3" height="1" fill="#b5cea8" opacity="0.17"/><rect x="616" y="153.00" width="1" height="1" fill="#d4d4d4" opacity="0.27"/><rect x="616" y="152.00" width="1" height="1" fill="#d4d4d4" opacity="0.11"/><rect x="606" y="155.00" width="6" height="1" fill="#ce9178" opacity="0.37"/><rect x="606" y="154.00" width="6" height="1" fill="#ce9178" opacity="0.15"/><rect x="612" y="155.00" width="1" height="1" fill="#d4d4d4" opacity="0.27"/><rect x="612" y="154.00" width="1" height="1" fill="#d4d4d4" opacity="0.11"/><rect x="614" y="155.00" width="3" height="1" fill="#b5cea8" opacity="0.42"/><rect x="614" y="154.00" width="3" height="1" fill="#b5cea8" opacity="0.17"/><rect x="617" y="155.00" width="1" height="1" fill="#d4d4d4" opacity="0.27"/><rect x="617" y="154.00" width="1" height="1" fill="#d4d4d4" opacity="0.11"/><rect x="606" y="157.00" width="10" height="1" fill="#ce9178" opacity="0.37"/><rect x="606" y="156.00" width="10" height="1" fill="#ce9178" opacity="0.15"/><rect x="616" y="157.00" width="1" height="1" fill="#d4d4d4" opacity="0.27"/><rect x="616" y="156.00" width="1" height="1" fill="#d4d4d4" opacity="0.11"/><rect x="618" y="157.00" width="1" height="1" fill="#b5cea8" opacity="0.42"/><rect x="618" y="156.00" width="1" height="1" fill="#b5cea8" opacity="0.17"/><rect x="619" y="157.00" width="1" height="1" fill="#d4d4d4" opacity="0.27"/><rect x="619" y="156.00" width="1" height="1" fill="#d4d4d4" opacity="0.11"/><rect x="606" y="159.00" width="9" height="1" fill="#ce9178" opacity="0.37"/><rect x="606" y="158.00" width="9" height="1" fill="#ce9178" opacity="0.15"/><rect x="615" y="159.00" width="1" height="1" fill="#d4d4d4" opacity="0.27"/><rect x="615" y="158.00" width="1" height="1" fill="#d4d4d4" opacity="0.11"/><rect x="617" y="159.00" width="1" height="1" fill="#b5cea8" opacity="0.42"/><rect x="617" y="158.00" width="1" height="1" fill="#b5cea8" opacity="0.17"/><rect x="618" y="159.00" width="1" height="1" fill="#d4d4d4" opacity="0.27"/><rect x="618" y="158.00" width="1" height="1" fill="#d4d4d4" opacity="0.11"/><rect x="606" y="161.00" width="8" height="1" fill="#ce9178" opacity="0.37"/><rect x="606" y="160.00" width="8" height="1" fill="#ce9178" opacity="0.15"/><rect x="614" y="161.00" width="1" height="1" fill="#d4d4d4" opacity="0.27"/><rect x="614" y="160.00" width="1" height="1" fill="#d4d4d4" opacity="0.11"/><rect x="616" y="161.00" width="1" height="1" fill="#b5cea8" opacity="0.42"/><rect x="616" y="160.00" width="1" height="1" fill="#b5cea8" opacity="0.17"/><rect x="617" y="161.00" width="1" height="1" fill="#d4d4d4" opacity="0.27"/><rect x="617" y="160.00" width="1" height="1" fill="#d4d4d4" opacity="0.11"/><rect x="606" y="163.00" width="4" height="1" fill="#ce9178" opacity="0.37"/><rect x="606" y="162.00" width="4" height="1" fill="#ce9178" opacity="0.15"/><rect x="610" y="163.00" width="1" height="1" fill="#d4d4d4" opacity="0.27"/><rect x="610" y="162.00" width="1" height="1" fill="#d4d4d4" opacity="0.11"/><rect x="612" y="163.00" width="1" height="1" fill="#b5cea8" opacity="0.42"/><rect x="612" y="162.00" width="1" height="1" fill="#b5cea8" opacity="0.17"/><rect x="606" y="165.00" width="1" height="1" fill="#d4d4d4" opacity="0.27"/><rect x="606" y="164.00" width="1" height="1" fill="#d4d4d4" opacity="0.11"/><rect x="602" y="167.00" width="1" height="1" fill="#d4d4d4" opacity="0.27"/><rect x="602" y="166.00" width="1" height="1" fill="#d4d4d4" opacity="0.11"/><rect x="598" y="169.00" width="1" height="1" fill="#d4d4d4" opacity="0.27"/><rect x="598" y="168.00" width="1" height="1" fill="#d4d4d4" opacity="0.11"/><rect x="594" y="171.00" width="1" height="1" fill="#d4d4d4" opacity="0.27"/><rect x="594" y="170.00" width="1" height="1" fill="#d4d4d4" opacity="0.11"/><rect x="595" y="171.00" width="1" height="1" fill="#d4d4d4" opacity="0.27"/><rect x="595" y="170.00" width="1" height="1" fill="#d4d4d4" opacity="0.11"/></svg>
<div class="abs" style="left:661px;top:0;width:1px;height:431px;background:#171717"></div>
<div class="abs" style="left:662px;top:39px;width:9px;height:163px;background:#272727"></div>
<div class="abs" style="left:662px;top:100px;width:9px;height:2px;background:#a0a0a0"></div>
</div>
</body>
</html>
